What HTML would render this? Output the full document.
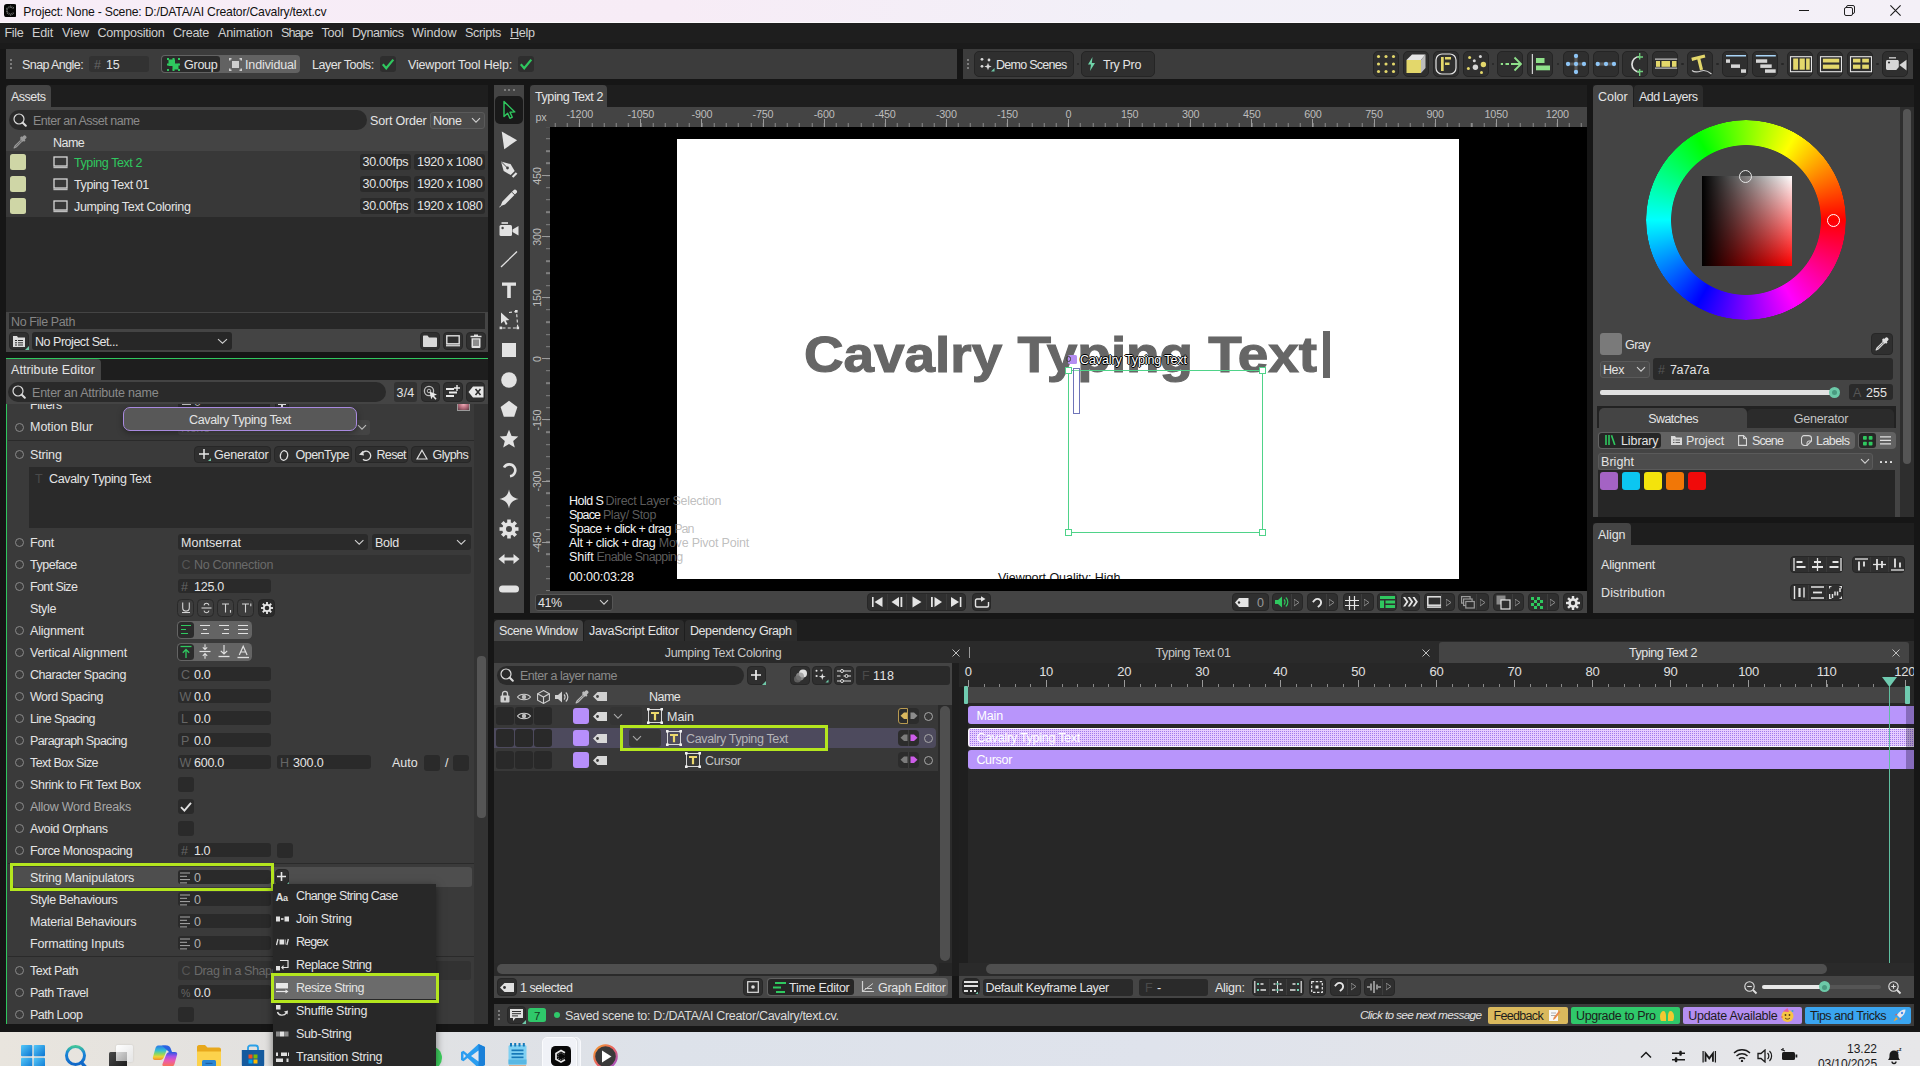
<!DOCTYPE html>
<html lang="en"><head><meta charset="utf-8"><title>Cavalry</title>
<style>
*{box-sizing:border-box;margin:0;padding:0}
html,body{width:1920px;height:1066px;overflow:hidden;background:#161616}
#root{position:relative;width:1920px;height:1066px;overflow:hidden;background:#161616;font-family:"Liberation Sans",sans-serif;font-size:12.5px;letter-spacing:-0.3px;color:#e4e4e4}
#root div,#root svg,#root span.a{position:absolute}
.t{white-space:pre}
.dim{color:#8c8c8c}
.ph{color:#8a8a8a}
.btn{background:#2b2b2b;border:1px solid #262626;border-radius:4px;box-shadow:0 0 0 1px #4a4a4a inset}
.tb{background:#333;border:1px solid #2a2a2a;border-radius:4px}
.inp{background:#2a2a2a;border-radius:3px}
.sel{background:#4a4a4a;border:1px solid #5a5a5a;border-radius:3px}
.pill{background:#2a2a2a;border-radius:11px}
.tab{background:#444;border-radius:4px 4px 0 0}
.tab2{background:#2c2c2c;border-radius:4px 4px 0 0}
.tbb{background:#2f2f2f;border:1px solid #252525;border-radius:5px}
.btn2{background:#2f2f2f;border:1px solid #272727;border-radius:4px}
.rl{font-size:10.8px;letter-spacing:-.2px;color:#bdbdbd}

</style></head>
<body>
<div id="root">
<!-- base -->
<div style="left:0px;top:0px;width:1920px;height:23px;background:linear-gradient(90deg,#f7edf7 0%,#f7ecf6 35%,#f2f0f8 60%,#f4f0f7 100%)"></div>
<div style="left:0px;top:22px;width:1920px;height:1px;background:#fcfafc"></div>
<div style="left:0px;top:23px;width:1920px;height:19.5px;background:#1e1e1e"></div>
<div style="left:6px;top:85px;width:482px;height:22px;background:#1e1e1e"></div>
<div style="left:530px;top:85px;width:1057px;height:22px;background:#1e1e1e"></div>
<div style="left:1593px;top:85px;width:321px;height:22px;background:#1e1e1e"></div>
<div style="left:6px;top:359px;width:482px;height:21px;background:#1e1e1e"></div>
<div style="left:1593px;top:523px;width:321px;height:22px;background:#1e1e1e"></div>
<div style="left:494px;top:619px;width:1420px;height:22px;background:#1e1e1e"></div>
<div style="left:0px;top:42.5px;width:1920px;height:6.5px;background:#1b1b1b"></div>
<svg style="left:3.6px;top:4.3px;" width="12.8" height="13.2" viewBox="0 0 12.8 13.2"><rect x="0" y="0" width="12.800" height="13.200" rx="2.800" fill="#050505"/><path d="M9.700 4.300 6.600 2.500 3 4.600v4l3.600 2.100 3.100-1.800" fill="none" stroke="#8a8a8a" stroke-width="1.700" stroke-dasharray="1.100 .6"/><path d="M9.700 4.300 6.600 2.500 3 4.600v4l3.600 2.100 3.100-1.800" fill="none" stroke="#050505" stroke-width=".5"/></svg>
<div class="t" style="left:23.3px;top:2.5px;height:18px;line-height:18px;letter-spacing:-0.20px;font-size:12.2px;color:#111">Project: None - Scene: D:/DATA/AI Creator/Cavalry/text.cv</div>
<div style="left:1799px;top:10px;width:10.3px;height:1px;background:#1a1a1a"></div>
<svg style="left:1843.5px;top:4.7px;" width="12" height="12" viewBox="0 0 12 12"><rect x="0.5" y="2.5" width="8" height="8" rx="1.5" fill="none" stroke="#222"/><path d="M2.5 2.5v-.5a1.5 1.5 0 0 1 1.5-1.5h5a1.5 1.5 0 0 1 1.5 1.5v5a1.5 1.5 0 0 1-1.5 1.5h-.5" fill="none" stroke="#222"/></svg>
<svg style="left:1889.5px;top:4.5px;" width="11" height="11" viewBox="0 0 11 11"><path d="M.4.400l10.200 10.200M10.600.400l-10.200 10.200" stroke="#1a1a1a" stroke-width="1.100"/></svg>
<!-- top -->
<div class="t" style="left:4.5px;top:25.0px;height:16px;line-height:16px;letter-spacing:-0.32px;font-size:12.6px;color:#cfcfcf">File</div>
<div class="t" style="left:32px;top:25.0px;height:16px;line-height:16px;letter-spacing:-0.18px;font-size:12.6px;color:#cfcfcf">Edit</div>
<div class="t" style="left:62px;top:25.0px;height:16px;line-height:16px;letter-spacing:-0.02px;font-size:12.6px;color:#cfcfcf">View</div>
<div class="t" style="left:97.5px;top:25.0px;height:16px;line-height:16px;letter-spacing:-0.27px;font-size:12.6px;color:#cfcfcf">Composition</div>
<div class="t" style="left:173px;top:25.0px;height:16px;line-height:16px;letter-spacing:-0.30px;font-size:12.6px;color:#cfcfcf">Create</div>
<div class="t" style="left:218px;top:25.0px;height:16px;line-height:16px;letter-spacing:-0.17px;font-size:12.6px;color:#cfcfcf">Animation</div>
<div class="t" style="left:281px;top:25.0px;height:16px;line-height:16px;letter-spacing:-0.98px;font-size:12.6px;color:#cfcfcf">Shape</div>
<div class="t" style="left:321.5px;top:25.0px;height:16px;line-height:16px;letter-spacing:-0.28px;font-size:12.6px;color:#cfcfcf">Tool</div>
<div class="t" style="left:352px;top:25.0px;height:16px;line-height:16px;letter-spacing:-0.47px;font-size:12.6px;color:#cfcfcf">Dynamics</div>
<div class="t" style="left:412px;top:25.0px;height:16px;line-height:16px;letter-spacing:-0.05px;font-size:12.6px;color:#cfcfcf">Window</div>
<div class="t" style="left:465px;top:25.0px;height:16px;line-height:16px;letter-spacing:-0.36px;font-size:12.6px;color:#cfcfcf">Scripts</div>
<div class="t" style="left:510px;top:25.0px;height:16px;line-height:16px;color:#cfcfcf;font-size:12.6px"><u>H</u>elp</div>
<div style="left:6px;top:49px;width:951px;height:30px;background:#3c3c3c"></div>
<div style="left:963px;top:49px;width:950px;height:30px;background:#3c3c3c"></div>
<div style="left:10px;top:59px;width:2px;height:2px;background:#7c7c7c"></div>
<div style="left:10px;top:63px;width:2px;height:2px;background:#7c7c7c"></div>
<div style="left:10px;top:67px;width:2px;height:2px;background:#7c7c7c"></div>
<div style="left:967px;top:59px;width:2px;height:2px;background:#7c7c7c"></div>
<div style="left:967px;top:63px;width:2px;height:2px;background:#7c7c7c"></div>
<div style="left:967px;top:67px;width:2px;height:2px;background:#7c7c7c"></div>
<div class="t" style="left:22px;top:56.5px;height:16px;line-height:16px;letter-spacing:-0.58px;">Snap Angle:</div>
<div style="left:89px;top:56px;width:60px;height:16px;background:#323232;border-radius:3px"></div>
<div class="t" style="left:94px;top:56.5px;height:16px;line-height:16px;color:#666">#</div>
<div class="t" style="left:106px;top:56.5px;height:16px;line-height:16px;letter-spacing:-0.20px;">15</div>
<div style="left:161px;top:55px;width:139px;height:18px;background:#626262;border-radius:4px"></div>
<div style="left:162px;top:56px;width:58px;height:16px;background:#2a2a2a;border-radius:3px"></div>
<svg style="left:167px;top:58px;" width="13" height="13" viewBox="0 0 13 13"><rect x="1.5" y="1.5" width="6.5" height="6.5" fill="#2fc85f"/><rect x="5.5" y="5.5" width="6" height="6" fill="#2fc85f"/><g fill="#2fc85f"><rect x="0" y="0" width="2" height="2"/><rect x="5.5" y="0" width="2" height="2"/><rect x="11" y="0" width="2" height="2"/><rect x="0" y="5.5" width="2" height="2"/><rect x="11" y="5.5" width="2" height="2"/><rect x="0" y="11" width="2" height="2"/><rect x="5.5" y="11" width="2" height="2"/><rect x="11" y="11" width="2" height="2"/></g></svg>
<div class="t" style="left:184px;top:56.5px;height:16px;line-height:16px;letter-spacing:-0.25px;">Group</div>
<svg style="left:228.5px;top:58px;" width="13" height="13" viewBox="0 0 13 13"><rect x="3" y="3" width="7" height="7" fill="#cfcfcf"/><g fill="#cfcfcf"><rect x="0" y="0" width="2.5" height="1.5"/><rect x="0" y="0" width="1.5" height="2.5"/><rect x="10.5" y="0" width="2.5" height="1.5"/><rect x="11.5" y="0" width="1.5" height="2.5"/><rect x="0" y="11.5" width="2.5" height="1.5"/><rect x="0" y="10.5" width="1.5" height="2.5"/><rect x="10.5" y="11.5" width="2.5" height="1.5"/><rect x="11.5" y="10.5" width="1.5" height="2.5"/></g></svg>
<div class="t" style="left:245px;top:56.5px;height:16px;line-height:16px;letter-spacing:-0.13px;">Individual</div>
<div class="t" style="left:312px;top:56.5px;height:16px;line-height:16px;letter-spacing:-0.46px;">Layer Tools:</div>
<div style="left:380px;top:56px;width:16px;height:15.8px;background:#2e2e2e;border-radius:3px"></div>
<svg style="left:381px;top:57px;" width="14" height="14" viewBox="0 0 14 14"><path d="M1.800 7.300 5.200 11.200 12.300 2.600" fill="none" stroke="#2fc85f" stroke-width="2.200"/></svg>
<div class="t" style="left:408px;top:56.5px;height:16px;line-height:16px;letter-spacing:-0.17px;">Viewport Tool Help:</div>
<div style="left:518px;top:56px;width:16px;height:15.8px;background:#2e2e2e;border-radius:3px"></div>
<svg style="left:519px;top:57px;" width="14" height="14" viewBox="0 0 14 14"><path d="M1.800 7.300 5.200 11.200 12.300 2.600" fill="none" stroke="#2fc85f" stroke-width="2.200"/></svg>
<div class="tbb" style="left:973.8px;top:50.7px;width:100.6px;height:26.8px;"></div>
<svg style="left:979.5px;top:56.5px;" width="15" height="15" viewBox="0 0 15 15"><g fill="#d8d8d8"><circle cx="2" cy="2.300" r="1.400"/><circle cx="9" cy="3" r="1.400"/><circle cx="2" cy="9.300" r="1.400"/><path d="M8 5.800l1 2.700 2.700 1-2.700 1-1 2.700-1-2.700-2.700-1 2.700-1z"/></g><path d="M14.500 11v3.500H11z" fill="#6fc8a8"/></svg>
<div class="t" style="left:996px;top:56.5px;height:16px;line-height:16px;letter-spacing:-0.73px;">Demo Scenes</div>
<div style="left:1076.6px;top:63px;width:2.4px;height:2.4px;background:#262626;border-radius:50%"></div>
<div class="tbb" style="left:1080.8px;top:50.7px;width:74.6px;height:26.8px;"></div>
<svg style="left:1087px;top:57px;" width="9" height="14" viewBox="0 0 9 14"><path d="M5.5 0 1 7.5h3L3 14l5-8H4.8z" fill="#6fd3a8"/></svg>
<div class="t" style="left:1103px;top:56.5px;height:16px;line-height:16px;letter-spacing:-0.36px;">Try Pro</div>
<div class="tbb" style="left:1372.8px;top:50.7px;width:26.4px;height:26.8px;"></div>
<svg style="left:1374px;top:52px;" width="25" height="24" viewBox="0 0 25 24"><circle cx="4.5" cy="4.5" r="1.550" fill="#e3d76b"/><circle cx="4.5" cy="12.0" r="1.550" fill="#e3d76b"/><circle cx="4.5" cy="19.5" r="1.550" fill="#e3d76b"/><circle cx="12.0" cy="4.5" r="1.550" fill="#e3d76b"/><circle cx="12.0" cy="12.0" r="1.550" fill="#e3d76b"/><circle cx="12.0" cy="19.5" r="1.550" fill="#e3d76b"/><circle cx="19.5" cy="4.5" r="1.550" fill="#e3d76b"/><circle cx="19.5" cy="12.0" r="1.550" fill="#e3d76b"/><circle cx="19.5" cy="19.5" r="1.550" fill="#e3d76b"/></svg>
<div class="tbb" style="left:1402.8px;top:50.7px;width:26.4px;height:26.8px;"></div>
<svg style="left:1404px;top:52px;" width="25" height="24" viewBox="0 0 25 24"><path d="M2.500 8 8 2.500h13.500L17 8z" fill="#e4e4e4"/><path d="M17 8l4.500-5.500V16L17 21z" fill="#bdbdbd"/><rect x="2.500" y="8" width="14.500" height="13" fill="#e3d76b"/></svg>
<div class="tbb" style="left:1432.8px;top:50.7px;width:26.4px;height:26.8px;"></div>
<svg style="left:1434px;top:52px;" width="25" height="24" viewBox="0 0 25 24"><rect x="2" y="2" width="20" height="20" rx="6" fill="none" stroke="#e4e4e4" stroke-width="1.200"/><rect x="7" y="5" width="2.700" height="14" fill="#e3d76b"/><rect x="11" y="5" width="6" height="2.500" fill="#e3d76b"/><rect x="11" y="10.500" width="4.500" height="2.500" fill="#e3d76b"/></svg>
<div class="tbb" style="left:1462.8px;top:50.7px;width:26.4px;height:26.8px;"></div>
<svg style="left:1464px;top:52px;" width="25" height="24" viewBox="0 0 25 24"><circle cx="5.600" cy="5.500" r="1.500" fill="#e3d76b"/><circle cx="16.400" cy="4.500" r="1.500" fill="#d6d6d6"/><circle cx="10.300" cy="8.700" r="1.500" fill="#d6d6d6"/><circle cx="19.400" cy="12.500" r="2.700" fill="#e3d76b"/><circle cx="11.400" cy="15.200" r="2.700" fill="#d6d6d6"/><circle cx="4.400" cy="16.400" r="1.500" fill="#e3d76b"/><circle cx="17.500" cy="20.400" r="1.500" fill="#e3d76b"/></svg>
<div class="tbb" style="left:1496.8px;top:50.7px;width:26.4px;height:26.8px;"></div>
<svg style="left:1498px;top:52px;" width="25" height="24" viewBox="0 0 25 24"><path d="M2.800 12H5M7.500 12H11M13 12h9.500M16.500 5.500 23 12l-6.500 6.500" fill="none" stroke="#8fe08a" stroke-width="1.800"/></svg>
<div class="tbb" style="left:1526.8px;top:50.7px;width:26.4px;height:26.8px;"></div>
<svg style="left:1528px;top:52px;" width="25" height="24" viewBox="0 0 25 24"><rect x="3.800" y="2" width="1.100" height="20" fill="#e4e4e4"/><rect x="8" y="6" width="8.500" height="5" fill="#8fe08a"/><rect x="8" y="13.500" width="14" height="4.800" fill="#8fe08a"/></svg>
<div class="tbb" style="left:1562.8px;top:50.7px;width:26.4px;height:26.8px;"></div>
<svg style="left:1564px;top:52px;" width="25" height="24" viewBox="0 0 25 24"><path d="M4 12h16M12 4v16" stroke="#5a5a5a" stroke-width="3.200"/><g fill="#8ec5f5"><circle cx="12" cy="12" r="2.150"/><circle cx="12" cy="4" r="2.150"/><circle cx="12" cy="20" r="2.150"/><circle cx="4" cy="12" r="2.150"/><circle cx="20" cy="12" r="2.150"/></g></svg>
<div class="tbb" style="left:1592.8px;top:50.7px;width:26.4px;height:26.8px;"></div>
<svg style="left:1594px;top:52px;" width="25" height="24" viewBox="0 0 25 24"><path d="M3.700 12H20" stroke="#5a5a5a" stroke-width="3.200"/><g fill="#8ec5f5"><circle cx="3.700" cy="12" r="2.150"/><circle cx="12" cy="12" r="2.150"/><circle cx="20" cy="12" r="2.150"/></g></svg>
<div class="tbb" style="left:1621.8px;top:50.7px;width:26.4px;height:26.8px;"></div>
<svg style="left:1623px;top:52px;" width="25" height="24" viewBox="0 0 25 24"><path d="M16.700 4.500A7.750 7.750 0 0 0 16.700 20" fill="none" stroke="#e0e0e0" stroke-width="1.700"/><path d="M16.700 1v6.500M16.700 17v7M14 5h6M14 19.500h6" stroke="#6fcf7c" stroke-width="1.300"/></svg>
<div class="tbb" style="left:1651.8px;top:50.7px;width:26.4px;height:26.8px;"></div>
<svg style="left:1653px;top:52px;" width="25" height="24" viewBox="0 0 25 24"><rect x="2" y="6.600" width="22.200" height="1" fill="#e4e4e4"/><rect x="2" y="15.600" width="22.200" height="1" fill="#e4e4e4"/><rect x="3" y="9" width="4" height="5.800" fill="#e3d76b"/><rect x="8.500" y="9" width="8.500" height="5.800" fill="#e3d76b"/><rect x="19" y="9" width="4.500" height="5.800" fill="#e3d76b"/></svg>
<div class="tbb" style="left:1686.8px;top:50.7px;width:26.4px;height:26.8px;"></div>
<svg style="left:1688px;top:52px;" width="25" height="24" viewBox="0 0 25 24"><path d="M3.300 5.800 16.600 2.500l.8 3.100-5 1.250 2.650 10.600-3.100.8L9.300 7.600l-5.200 1.300z" fill="#e3d76b"/><path d="M4 18.500c3 2.500 6 1.500 9 .5s7 0 10.500 3" fill="none" stroke="#d0d0d0" stroke-width="1.100"/></svg>
<div class="tbb" style="left:1721.8px;top:50.7px;width:26.4px;height:26.8px;"></div>
<svg style="left:1723px;top:52px;" width="25" height="24" viewBox="0 0 25 24"><rect x="3" y="3" width="20" height="1.500" fill="#a9d5f8"/><rect x="3" y="7.300" width="4" height="3.500" fill="#d6d6d6"/><rect x="8" y="12.400" width="9" height="3.500" fill="#d6d6d6"/><rect x="18" y="17.300" width="5" height="3.500" fill="#d6d6d6"/></svg>
<div class="tbb" style="left:1751.8px;top:50.7px;width:26.4px;height:26.8px;"></div>
<svg style="left:1753px;top:52px;" width="25" height="24" viewBox="0 0 25 24"><rect x="2.800" y="3" width="20" height="1.500" fill="#a9d5f8"/><rect x="3" y="7.300" width="11.200" height="3.500" fill="#d6d6d6"/><rect x="7.300" y="12.400" width="11.400" height="3.500" fill="#d6d6d6"/><rect x="12" y="17.300" width="10.700" height="3.500" fill="#d6d6d6"/></svg>
<div class="tbb" style="left:1786.8px;top:50.7px;width:26.4px;height:26.8px;"></div>
<svg style="left:1788px;top:52px;" width="25" height="24" viewBox="0 0 25 24"><rect x="2.500" y="4.700" width="21" height="15" fill="none" stroke="#e4e4e4" stroke-width="1.100"/><rect x="5.200" y="6.500" width="4.900" height="11.200" fill="#e3d76b"/><rect x="11.600" y="6.500" width="5.200" height="11.200" fill="#e3d76b"/><rect x="18.100" y="6.500" width="3.600" height="11.200" fill="#e3d76b"/></svg>
<div class="tbb" style="left:1816.8px;top:50.7px;width:26.4px;height:26.8px;"></div>
<svg style="left:1818px;top:52px;" width="25" height="24" viewBox="0 0 25 24"><rect x="2.500" y="4.700" width="21" height="15" fill="none" stroke="#e4e4e4" stroke-width="1.100"/><rect x="4.900" y="6.700" width="16.300" height="3.800" fill="#e3d76b"/><rect x="4.900" y="12.600" width="16.300" height="4.200" fill="#e3d76b"/></svg>
<div class="tbb" style="left:1846.8px;top:50.7px;width:26.4px;height:26.8px;"></div>
<svg style="left:1848px;top:52px;" width="25" height="24" viewBox="0 0 25 24"><rect x="2.500" y="4.700" width="21" height="15" fill="none" stroke="#e4e4e4" stroke-width="1.100"/><rect x="5" y="6.700" width="7.400" height="3.800" fill="#e3d76b"/><rect x="14.200" y="6.700" width="6.700" height="3.800" fill="#e3d76b"/><rect x="5" y="12.600" width="7.400" height="4.200" fill="#e3d76b"/><rect x="14.200" y="12.600" width="6.700" height="4.200" fill="#e3d76b"/></svg>
<div class="tbb" style="left:1881.8px;top:50.7px;width:26.4px;height:26.8px;"></div>
<svg style="left:1883px;top:52px;" width="25" height="24" viewBox="0 0 25 24"><path d="M3 9.400c0-.9.600-1.500 1.500-1.500h9.800c.9 0 1.500.6 1.500 1.500v5.600L13.300 18H4.500C3.600 18 3 17.400 3 16.500z" fill="#d6d6d6"/><path d="M16.300 13 23.500 7.700v10.800z" fill="#d6d6d6"/><rect x="6" y="5.200" width="7" height="1.300" fill="#d6d6d6"/><circle cx="6" cy="10.500" r="1.100" fill="#2f2f2f"/></svg>
<div style="left:1491.8px;top:63px;width:2.4px;height:2.4px;background:#262626;border-radius:50%"></div>
<div style="left:1556.8px;top:63px;width:2.4px;height:2.4px;background:#262626;border-radius:50%"></div>
<div style="left:1681.3px;top:63px;width:2.4px;height:2.4px;background:#262626;border-radius:50%"></div>
<div style="left:1716.3px;top:63px;width:2.4px;height:2.4px;background:#262626;border-radius:50%"></div>
<div style="left:1781.3px;top:63px;width:2.4px;height:2.4px;background:#262626;border-radius:50%"></div>
<div style="left:1876.3px;top:63px;width:2.4px;height:2.4px;background:#262626;border-radius:50%"></div>
<!-- assets -->
<div class="tab" style="left:6px;top:85px;width:45px;height:22px;"></div>
<div class="t" style="left:11px;top:89.0px;height:16px;line-height:16px;letter-spacing:-0.50px;">Assets</div>
<div style="left:6px;top:107px;width:482px;height:44px;background:#444"></div>
<div style="left:6px;top:151px;width:482px;height:66px;background:#383838"></div>
<div style="left:6px;top:217px;width:482px;height:95px;background:#2a2a2a"></div>
<div class="pill" style="left:9px;top:110px;width:358px;height:20px;"></div>
<svg style="left:13px;top:113px;" width="14" height="14" viewBox="0 0 14 14"><circle cx="6" cy="6" r="5" fill="none" stroke="#dcdcdc" stroke-width="1.2"/><path d="M9.8 9.8l3 3" stroke="#dcdcdc" stroke-width="2" stroke-linecap="round"/></svg>
<div class="t ph" style="left:33px;top:112.5px;height:16px;line-height:16px;letter-spacing:-0.50px;">Enter an Asset name</div>
<div class="t" style="left:370px;top:112.5px;height:16px;line-height:16px;letter-spacing:-0.19px;">Sort Order</div>
<div class="sel" style="left:430px;top:112px;width:55px;height:17px;"></div>
<div class="t" style="left:433px;top:112.5px;height:16px;line-height:16px;letter-spacing:-0.35px;">None</div>
<svg style="left:471px;top:117px;" width="10" height="7" viewBox="0 0 10 7"><path d="M1 1.2l4 4 4-4" fill="none" stroke="#cfcfcf" stroke-width="1.1"/></svg>
<svg style="left:13px;top:135px;" width="14" height="14" viewBox="0 0 14 14"><path d="M10.200 .900a1.900 1.900 0 0 1 2.700 2.700l-1.100 1.100.7.700-1.300 1.300-.6-.600-.9.900-2.900-2.900.9-.900-.6-.600 1.300-1.300.7.700z" fill="#9a9a9a"/><path d="M7.700 5.300 2 11l-.9 2 2-.9 5.700-5.700" fill="none" stroke="#9a9a9a" stroke-width="1.100" stroke-linejoin="round"/></svg>
<div class="t" style="left:53px;top:135.0px;height:16px;line-height:16px;letter-spacing:-0.54px;">Name</div>
<div style="left:10px;top:154px;width:16px;height:16px;background:#cfd6a6;border-radius:2.5px"></div>
<svg style="left:53px;top:156px;" width="15" height="13" viewBox="0 0 15 13"><rect x="1" y="1" width="13" height="9" fill="none" stroke="#d8d8d8" stroke-width="1.3"/><rect x="0.4" y="10.6" width="14.2" height="1.6" fill="#bdbdbd"/></svg>
<div class="t" style="left:74px;top:155.0px;height:16px;line-height:16px;letter-spacing:-0.42px;color:#2fc85f">Typing Text 2</div>
<div style="left:360px;top:154px;width:51px;height:16px;background:#2a2a2a;border-radius:3px"></div>
<div class="t" style="left:362.5px;top:153.5px;height:16px;line-height:16px;letter-spacing:-0.27px;">30.00fps</div>
<div style="left:414px;top:154px;width:71px;height:16px;background:#2a2a2a;border-radius:3px"></div>
<div class="t" style="left:417px;top:153.5px;height:16px;line-height:16px;letter-spacing:-0.31px;">1920 x 1080</div>
<div style="left:10px;top:176px;width:16px;height:16px;background:#cfd6a6;border-radius:2.5px"></div>
<svg style="left:53px;top:178px;" width="15" height="13" viewBox="0 0 15 13"><rect x="1" y="1" width="13" height="9" fill="none" stroke="#d8d8d8" stroke-width="1.3"/><rect x="0.4" y="10.6" width="14.2" height="1.6" fill="#bdbdbd"/></svg>
<div class="t" style="left:74px;top:177.0px;height:16px;line-height:16px;letter-spacing:-0.39px;color:#e4e4e4">Typing Text 01</div>
<div style="left:360px;top:176px;width:51px;height:16px;background:#2a2a2a;border-radius:3px"></div>
<div class="t" style="left:362.5px;top:175.5px;height:16px;line-height:16px;letter-spacing:-0.27px;">30.00fps</div>
<div style="left:414px;top:176px;width:71px;height:16px;background:#2a2a2a;border-radius:3px"></div>
<div class="t" style="left:417px;top:175.5px;height:16px;line-height:16px;letter-spacing:-0.31px;">1920 x 1080</div>
<div style="left:10px;top:198px;width:16px;height:16px;background:#cfd6a6;border-radius:2.5px"></div>
<svg style="left:53px;top:200px;" width="15" height="13" viewBox="0 0 15 13"><rect x="1" y="1" width="13" height="9" fill="none" stroke="#d8d8d8" stroke-width="1.3"/><rect x="0.4" y="10.6" width="14.2" height="1.6" fill="#bdbdbd"/></svg>
<div class="t" style="left:74px;top:199.0px;height:16px;line-height:16px;letter-spacing:-0.33px;color:#e4e4e4">Jumping Text Coloring</div>
<div style="left:360px;top:198px;width:51px;height:16px;background:#2a2a2a;border-radius:3px"></div>
<div class="t" style="left:362.5px;top:197.5px;height:16px;line-height:16px;letter-spacing:-0.27px;">30.00fps</div>
<div style="left:414px;top:198px;width:71px;height:16px;background:#2a2a2a;border-radius:3px"></div>
<div class="t" style="left:417px;top:197.5px;height:16px;line-height:16px;letter-spacing:-0.31px;">1920 x 1080</div>
<div style="left:6px;top:312px;width:482px;height:40px;background:#444"></div>
<div style="left:9px;top:313px;width:476px;height:16px;background:#272727"></div>
<div class="t" style="left:11px;top:313.5px;height:16px;line-height:16px;letter-spacing:-0.40px;color:#858585">No File Path</div>
<div class="btn2" style="left:9px;top:332px;width:20px;height:18px;"></div>
<svg style="left:12px;top:335px;" width="14" height="13" viewBox="0 0 14 13"><path d="M1 1h4l1 1.5h7V12H1z" fill="#dcdcdc"/><path d="M3 5.5h2M6 5.5h5M3 7.8h2M6 7.8h5M3 10h2M6 10h5" stroke="#2a2a2a" stroke-width="1"/></svg>
<svg style="left:25px;top:346px;" width="4" height="4" viewBox="0 0 4 4"><path d="M4 0v4H0z" fill="#6fc8a8"/></svg>
<div style="left:32px;top:332px;width:200px;height:18px;background:#272727;border-radius:3px"></div>
<div class="t" style="left:35px;top:333.5px;height:16px;line-height:16px;letter-spacing:-0.47px;">No Project Set...</div>
<svg style="left:217px;top:338px;" width="11" height="7" viewBox="0 0 11 7"><path d="M1 1.2l4.5 4 4.5-4" fill="none" stroke="#cfcfcf" stroke-width="1.1"/></svg>
<div class="btn2" style="left:420px;top:332px;width:20px;height:18px;"></div>
<div class="btn2" style="left:443px;top:332px;width:20px;height:18px;"></div>
<div class="btn2" style="left:466px;top:332px;width:20px;height:18px;"></div>
<svg style="left:423px;top:335px;" width="14" height="12" viewBox="0 0 14 12"><path d="M0 1.5C0 .8.5.5 1 .5h3.5l1.5 2h7c.6 0 1 .4 1 1V11c0 .6-.4 1-1 1H1c-.6 0-1-.4-1-1z" fill="#d8d8d8"/></svg>
<svg style="left:446px;top:335px;" width="14" height="12" viewBox="0 0 14 12"><rect x=".8" y=".8" width="12.4" height="8" fill="none" stroke="#e0e0e0" stroke-width="1.4"/><rect x="0" y="9.6" width="14" height="1.8" fill="#c8c8c8"/></svg>
<svg style="left:470px;top:334px;" width="12" height="14" viewBox="0 0 12 14"><path d="M4 .5h4v1.2h3.5v1.6H.5V1.7H4z" fill="#e0e0e0"/><path d="M1.5 4.2h9V13a1 1 0 0 1-1 1h-7a1 1 0 0 1-1-1z" fill="#e0e0e0"/><path d="M4 5.5v6.5M6 5.5v6.5M8 5.5v6.5" stroke="#3a3a3a" stroke-width="1"/></svg>
<!-- attr -->
<div style="left:6px;top:358px;width:482px;height:1px;background:#2fc85f"></div>
<div style="left:6px;top:359px;width:95px;height:21px;background:#444;border-radius:0 4px 0 0"></div>
<div class="t" style="left:11px;top:362.0px;height:16px;line-height:16px;letter-spacing:0.08px;">Attribute Editor</div>
<div style="left:6px;top:380px;width:482px;height:24px;background:#444"></div>
<div class="pill" style="left:8px;top:382px;width:378px;height:20px;"></div>
<svg style="left:12px;top:385px;" width="14" height="14" viewBox="0 0 14 14"><circle cx="6" cy="6" r="5" fill="none" stroke="#dcdcdc" stroke-width="1.2"/><path d="M9.8 9.8l3 3" stroke="#dcdcdc" stroke-width="2" stroke-linecap="round"/></svg>
<div class="t ph" style="left:32px;top:384.5px;height:16px;line-height:16px;letter-spacing:-0.21px;">Enter an Attribute name</div>
<div style="left:394px;top:382px;width:23px;height:20px;background:#323232;border-radius:3px"></div>
<div class="t" style="left:396.5px;top:384.5px;height:16px;line-height:16px;letter-spacing:0.20px;">3/4</div>
<div class="btn2" style="left:420.5px;top:382px;width:19.5px;height:20px;"></div>
<div class="btn2" style="left:443px;top:382px;width:19.5px;height:20px;"></div>
<div class="btn2" style="left:465.5px;top:382px;width:19.5px;height:20px;"></div>
<svg style="left:423px;top:385px;" width="15" height="15" viewBox="0 0 15 15"><circle cx="6" cy="6" r="4.6" fill="none" stroke="#bdbdbd" stroke-width="1.3"/><circle cx="6" cy="6" r="1.8" fill="none" stroke="#bdbdbd" stroke-width="1"/><path d="M6.5 6.5l7.5 3-3 1.2 2.6 3-1.2 1-2.6-3-1.6 2.6z" fill="#e8e8e8"/></svg>
<svg style="left:446px;top:385px;" width="14" height="14" viewBox="0 0 14 14"><path d="M0 4h8M3 7.5h8M0 11h8" stroke="#e8e8e8" stroke-width="2"/><path d="M11 0v6M8 3h6" stroke="#e8e8e8" stroke-width="1.4"/></svg>
<svg style="left:467.5px;top:386px;" width="16" height="12" viewBox="0 0 16 12"><path d="M5 .5h10.5v11H5L.5 6z" fill="#e8e8e8"/><path d="M7.5 3l5 6M12.5 3l-5 6" stroke="#2f2f2f" stroke-width="1.6"/></svg>
<div style="left:6px;top:404px;width:468px;height:620px;background:#3a3a3a"></div>
<div style="left:474px;top:404px;width:14px;height:620px;background:#333"></div>
<div style="left:477px;top:656px;width:8.5px;height:162px;background:#555;border-radius:4px"></div>
<div style="left:6px;top:404px;width:1.2px;height:620px;background:#2fc85f"></div>
<div style="left:8px;top:404px;width:466px;height:12px;overflow:hidden">
<div class="t" style="left:22px;top:-7.0px;height:16px;line-height:16px;">Filters</div>
<div style="left:170px;top:-9px;width:92px;height:14px;background:#2a2a2a;border-radius:3px"></div>
<div style="left:174px;top:0px;width:9px;height:1.2px;background:#bdbdbd"></div>
<div class="t" style="left:186px;top:-10.0px;height:16px;line-height:16px;color:#b0b0b0">0</div>
<div class="btn2" style="left:267px;top:-10px;width:14px;height:16px;"></div>
<div style="left:270px;top:-1px;width:8px;height:1.6px;background:#e0e0e0"></div>
<div style="left:273.2px;top:-1px;width:1.6px;height:5px;background:#e0e0e0"></div>
<div style="left:448.5px;top:-6px;width:13px;height:13px;background:radial-gradient(circle at 50% 45%,#f4b0bc 0,#b06878 55%,#5a3a42 100%);border:1px solid #9a9a9a"></div>
</div>
<div style="left:178px;top:420px;width:192px;height:15px;background:#444;border-radius:3px"></div>
<div class="t" style="left:181px;top:420.0px;height:16px;line-height:16px;letter-spacing:-0.35px;color:#777">None</div>
<svg style="left:357px;top:424px;" width="10" height="7" viewBox="0 0 10 7"><path d="M1 1.2l4 4 4-4" fill="none" stroke="#bdbdbd" stroke-width="1.1"/></svg>
<div style="left:14.5px;top:422.5px;width:9px;height:9px;border:1.2px solid #8a8a8a;border-radius:50%"></div>
<div class="t" style="left:30px;top:419.0px;height:16px;line-height:16px;letter-spacing:-0.02px;color:#e4e4e4">Motion Blur</div>
<div style="left:8px;top:440px;width:466px;height:1px;background:#2a2a2a"></div>
<div style="left:14.5px;top:450.0px;width:9px;height:9px;border:1.2px solid #8a8a8a;border-radius:50%"></div>
<div class="t" style="left:30px;top:446.5px;height:16px;line-height:16px;letter-spacing:-0.16px;color:#e4e4e4">String</div>
<div class="btn2" style="left:194px;top:446px;width:76.5px;height:17px;"></div>
<div class="btn2" style="left:273.5px;top:446px;width:78px;height:17px;"></div>
<div class="btn2" style="left:354.5px;top:446px;width:53.5px;height:17px;"></div>
<div class="btn2" style="left:411px;top:446px;width:59.5px;height:17px;"></div>
<svg style="left:199px;top:449px;" width="12" height="12" viewBox="0 0 12 12"><path d="M5 0v10M0 5h10" stroke="#e8e8e8" stroke-width="1.5"/><path d="M12 9v3H9z" fill="#6fc8a8"/></svg>
<div class="t" style="left:214px;top:446.5px;height:16px;line-height:16px;letter-spacing:-0.20px;">Generator</div>
<svg style="left:279px;top:449.5px;" width="10" height="11" viewBox="0 0 10 11"><ellipse cx="5" cy="5.5" rx="3.6" ry="4.8" fill="none" stroke="#e0e0e0" stroke-width="1.3" transform="rotate(12 5 5.5)"/></svg>
<div class="t" style="left:295.5px;top:446.5px;height:16px;line-height:16px;letter-spacing:-0.52px;">OpenType</div>
<svg style="left:359px;top:449px;" width="13" height="12" viewBox="0 0 13 12"><path d="M3.2 4.3A4.6 4.6 0 1 1 4 10.2" fill="none" stroke="#e0e0e0" stroke-width="1.3"/><path d="M0 5.8 3.8 1.8 5 6.6z" fill="#e0e0e0"/></svg>
<div class="t" style="left:376.5px;top:446.5px;height:16px;line-height:16px;letter-spacing:-0.67px;">Reset</div>
<svg style="left:416px;top:449px;" width="12" height="11" viewBox="0 0 12 11"><path d="M6 1.2 11 10H1z" fill="none" stroke="#e0e0e0" stroke-width="1.2"/></svg>
<div class="t" style="left:432.5px;top:446.5px;height:16px;line-height:16px;letter-spacing:-0.53px;">Glyphs</div>
<div style="left:29px;top:467px;width:443px;height:61px;background:#2a2a2a"></div>
<div class="t" style="left:35px;top:471.0px;height:16px;line-height:16px;color:#4a4a4a">T</div>
<div class="t" style="left:49px;top:471.0px;height:16px;line-height:16px;letter-spacing:-0.35px;">Cavalry Typing Text</div>
<div style="left:123px;top:407px;width:234px;height:24px;background:#585858;border:1.6px solid #a98ae0;border-radius:7px;box-shadow:0 2px 6px rgba(0,0,0,.35)"></div>
<div class="t" style="left:90.0px;width:300px;text-align:center;top:411.5px;height:16px;line-height:16px;letter-spacing:-0.35px;">Cavalry Typing Text</div>
<div style="left:14.5px;top:538.0px;width:9px;height:9px;border:1.2px solid #8a8a8a;border-radius:50%"></div>
<div class="t" style="left:30px;top:534.5px;height:16px;line-height:16px;letter-spacing:-0.25px;color:#e4e4e4">Font</div>
<div style="left:178px;top:534px;width:190px;height:16px;background:#2a2a2a;border-radius:3px"></div>
<div class="t" style="left:181px;top:534.5px;height:16px;line-height:16px;letter-spacing:0.03px;">Montserrat</div>
<svg style="left:354px;top:539px;" width="11" height="7" viewBox="0 0 11 7"><path d="M1 1.2l4.2 4 4.2-4" fill="none" stroke="#d0d0d0" stroke-width="1.1"/></svg>
<div style="left:372px;top:534px;width:99px;height:16px;background:#2a2a2a;border-radius:3px"></div>
<div class="t" style="left:375px;top:534.5px;height:16px;line-height:16px;letter-spacing:-0.26px;">Bold</div>
<svg style="left:456px;top:539px;" width="11" height="7" viewBox="0 0 11 7"><path d="M1 1.2l4.2 4 4.2-4" fill="none" stroke="#d0d0d0" stroke-width="1.1"/></svg>
<div style="left:14.5px;top:560.0px;width:9px;height:9px;border:1.2px solid #8a8a8a;border-radius:50%"></div>
<div class="t" style="left:30px;top:556.5px;height:16px;line-height:16px;letter-spacing:-0.49px;color:#e4e4e4">Typeface</div>
<div style="left:178px;top:555px;width:293px;height:19px;background:#323232;border-radius:3px"></div>
<div class="t" style="left:181.5px;top:556.5px;height:16px;line-height:16px;color:#555">C</div>
<div class="t" style="left:194px;top:556.5px;height:16px;line-height:16px;letter-spacing:-0.28px;color:#6a6a6a">No Connection</div>
<div style="left:14.5px;top:582.0px;width:9px;height:9px;border:1.2px solid #8a8a8a;border-radius:50%"></div>
<div class="t" style="left:30px;top:578.5px;height:16px;line-height:16px;letter-spacing:-0.61px;color:#e4e4e4">Font Size</div>
<div style="left:178px;top:579px;width:92.5px;height:13.8px;background:#2a2a2a;border-radius:3px"></div>
<div class="t" style="left:181px;top:578.5px;height:16px;line-height:16px;color:#666;font-size:12.5px">#</div>
<div class="t" style="left:194px;top:578.6px;height:16px;line-height:16px;letter-spacing:-0.26px;color:#e4e4e4">125.0</div>
<div class="t" style="left:30px;top:600.5px;height:16px;line-height:16px;letter-spacing:-0.36px;color:#e4e4e4">Style</div>
<div style="left:177.3px;top:599.4px;width:17.2px;height:17.2px;background:#3d3d3d;border:1px solid #292929;border-radius:4.500px"></div>
<div style="left:197.3px;top:599.4px;width:17.2px;height:17.2px;background:#3d3d3d;border:1px solid #292929;border-radius:4.500px"></div>
<div style="left:217.3px;top:599.4px;width:17.2px;height:17.2px;background:#3d3d3d;border:1px solid #292929;border-radius:4.500px"></div>
<div style="left:237.3px;top:599.4px;width:17.2px;height:17.2px;background:#3d3d3d;border:1px solid #292929;border-radius:4.500px"></div>
<div style="left:258.2px;top:599.4px;width:17.2px;height:17.2px;background:#2b2b2b;border:1px solid #262626;border-radius:4.500px"></div>
<svg style="left:181px;top:602px;" width="10" height="12" viewBox="0 0 10 12"><path d="M1.700 .5v5.300a3.300 3.300 0 0 0 6.600 0V.5" fill="none" stroke="#d4d4d4" stroke-width="1.100"/><path d="M1 10.500h8" stroke="#d4d4d4" stroke-width="1.100"/></svg>
<svg style="left:200.5px;top:602px;" width="11" height="12" viewBox="0 0 11 12"><path d="M8 3.300C7.500 1.800 6.500 1.300 5.500 1.300S3.300 1.800 3 3.300M3 8.700c.3 1.500 1.300 2 2.500 2s2.200-.5 2.500-2" fill="none" stroke="#d4d4d4" stroke-width="1.100"/><path d="M.5 6h10" stroke="#d4d4d4" stroke-width="1.100"/></svg>
<svg style="left:220.5px;top:602px;" width="11" height="12" viewBox="0 0 11 12"><path d="M1 2h7M4.500 2v8.500" fill="none" stroke="#d4d4d4" stroke-width="1.100"/><path d="M9.500 8v2.700" stroke="#d4d4d4" stroke-width="1.100"/></svg>
<svg style="left:240.5px;top:602px;" width="11" height="12" viewBox="0 0 11 12"><path d="M1 2h7M4.500 2v8.500" fill="none" stroke="#d4d4d4" stroke-width="1.100"/><path d="M9.800 1.500v2.700" stroke="#d4d4d4" stroke-width="1.100"/></svg>
<svg style="left:260.8px;top:602px;" width="12" height="12" viewBox="0 0 12 12"><rect x="5.100" y="0" width="1.800" height="3" fill="#e8e8e8" transform="rotate(0 6 6)"/><rect x="5.100" y="0" width="1.800" height="3" fill="#e8e8e8" transform="rotate(45 6 6)"/><rect x="5.100" y="0" width="1.800" height="3" fill="#e8e8e8" transform="rotate(90 6 6)"/><rect x="5.100" y="0" width="1.800" height="3" fill="#e8e8e8" transform="rotate(135 6 6)"/><rect x="5.100" y="0" width="1.800" height="3" fill="#e8e8e8" transform="rotate(180 6 6)"/><rect x="5.100" y="0" width="1.800" height="3" fill="#e8e8e8" transform="rotate(225 6 6)"/><rect x="5.100" y="0" width="1.800" height="3" fill="#e8e8e8" transform="rotate(270 6 6)"/><rect x="5.100" y="0" width="1.800" height="3" fill="#e8e8e8" transform="rotate(315 6 6)"/><circle cx="6" cy="6" r="4" fill="#e8e8e8"/><circle cx="6" cy="6" r="2.300" fill="#2b2b2b"/></svg>
<div style="left:14.5px;top:626.0px;width:9px;height:9px;border:1.2px solid #8a8a8a;border-radius:50%"></div>
<div class="t" style="left:30px;top:622.5px;height:16px;line-height:16px;letter-spacing:-0.19px;color:#e4e4e4">Alignment</div>
<div style="left:177.2px;top:621px;width:75px;height:18px;background:#646464;border-radius:4.500px"></div>
<div style="left:178.3px;top:622.2px;width:15.7px;height:15.6px;background:#2b2b2b;border-radius:3.500px"></div>
<div style="left:181px;top:624.9px;width:10px;height:1.3px;background:#2fc85f"></div>
<div style="left:181px;top:628.9499999999999px;width:5px;height:1.3px;background:#2fc85f"></div>
<div style="left:181px;top:633.0px;width:7px;height:1.3px;background:#2fc85f"></div>
<div style="left:200px;top:624.9px;width:10px;height:1.3px;background:#e0e0e0"></div>
<div style="left:203px;top:628.9499999999999px;width:4px;height:1.3px;background:#e0e0e0"></div>
<div style="left:201px;top:633.0px;width:8px;height:1.3px;background:#e0e0e0"></div>
<div style="left:219px;top:624.9px;width:10.199999999999989px;height:1.3px;background:#e0e0e0"></div>
<div style="left:224px;top:628.9499999999999px;width:5.199999999999989px;height:1.3px;background:#e0e0e0"></div>
<div style="left:222px;top:633.0px;width:7.199999999999989px;height:1.3px;background:#e0e0e0"></div>
<div style="left:238px;top:624.9px;width:10.199999999999989px;height:1.3px;background:#e0e0e0"></div>
<div style="left:238px;top:628.9499999999999px;width:10.199999999999989px;height:1.3px;background:#e0e0e0"></div>
<div style="left:238px;top:633.0px;width:10.199999999999989px;height:1.3px;background:#e0e0e0"></div>
<div style="left:14.5px;top:648.0px;width:9px;height:9px;border:1.2px solid #8a8a8a;border-radius:50%"></div>
<div class="t" style="left:30px;top:644.5px;height:16px;line-height:16px;letter-spacing:-0.13px;color:#e4e4e4">Vertical Alignment</div>
<div style="left:177.2px;top:643px;width:75px;height:18px;background:#646464;border-radius:4.500px"></div>
<div style="left:178.3px;top:644.2px;width:15.7px;height:15.6px;background:#2b2b2b;border-radius:3.500px"></div>
<svg style="left:179.5px;top:645px;" width="13" height="14" viewBox="0 0 13 14"><path d="M.5 1.500h11" stroke="#2fc85f" stroke-width="1.300"/><path d="M6 13V4.500M2.800 7.700 6 4.500l3.200 3.200" fill="none" stroke="#2fc85f" stroke-width="1.300"/></svg>
<svg style="left:198.5px;top:644px;" width="13" height="16" viewBox="0 0 13 16"><path d="M.5 7.500h11" stroke="#e0e0e0" stroke-width="1.200"/><path d="M6 .300v5.200M3.800 3.300 6 5.500l2.200-2.200M6 14.800V9.600M3.800 11.800 6 9.600l2.200 2.200" fill="none" stroke="#e0e0e0" stroke-width="1.100"/></svg>
<svg style="left:217.5px;top:644px;" width="13" height="16" viewBox="0 0 13 16"><path d="M.5 12.500h11" stroke="#e0e0e0" stroke-width="1.300"/><path d="M6 1v9M2.800 6.800 6 10l3.200-3.200" fill="none" stroke="#e0e0e0" stroke-width="1.200"/></svg>
<svg style="left:236.5px;top:644px;" width="13" height="16" viewBox="0 0 13 16"><path d="M2.300 11 6.200 2.200 10.100 11M3.600 8h5.200" fill="none" stroke="#e0e0e0" stroke-width="1.200"/><path d="M.5 13.500h11.500" stroke="#e0e0e0" stroke-width="1.300"/></svg>
<div style="left:14.5px;top:670.0px;width:9px;height:9px;border:1.2px solid #8a8a8a;border-radius:50%"></div>
<div class="t" style="left:30px;top:666.5px;height:16px;line-height:16px;letter-spacing:-0.45px;color:#e4e4e4">Character Spacing</div>
<div style="left:178px;top:667.3px;width:92.5px;height:13.8px;background:#2a2a2a;border-radius:3px"></div>
<div class="t" style="left:181px;top:666.8px;height:16px;line-height:16px;color:#666;font-size:12.5px">C</div>
<div class="t" style="left:194px;top:666.9px;height:16px;line-height:16px;letter-spacing:-0.33px;color:#e4e4e4">0.0</div>
<div style="left:14.5px;top:692.0px;width:9px;height:9px;border:1.2px solid #8a8a8a;border-radius:50%"></div>
<div class="t" style="left:30px;top:688.5px;height:16px;line-height:16px;letter-spacing:-0.45px;color:#e4e4e4">Word Spacing</div>
<div style="left:178px;top:689.3px;width:92.5px;height:13.8px;background:#2a2a2a;border-radius:3px"></div>
<div class="t" style="left:179.5px;top:688.8px;height:16px;line-height:16px;color:#666;font-size:12.5px">W</div>
<div class="t" style="left:194px;top:688.9px;height:16px;line-height:16px;letter-spacing:-0.33px;color:#e4e4e4">0.0</div>
<div style="left:14.5px;top:714.0px;width:9px;height:9px;border:1.2px solid #8a8a8a;border-radius:50%"></div>
<div class="t" style="left:30px;top:710.5px;height:16px;line-height:16px;letter-spacing:-0.61px;color:#e4e4e4">Line Spacing</div>
<div style="left:178px;top:711.3px;width:92.5px;height:13.8px;background:#2a2a2a;border-radius:3px"></div>
<div class="t" style="left:181px;top:710.8px;height:16px;line-height:16px;color:#666;font-size:12.5px">L</div>
<div class="t" style="left:194px;top:710.9px;height:16px;line-height:16px;letter-spacing:-0.33px;color:#e4e4e4">0.0</div>
<div style="left:14.5px;top:736.0px;width:9px;height:9px;border:1.2px solid #8a8a8a;border-radius:50%"></div>
<div class="t" style="left:30px;top:732.5px;height:16px;line-height:16px;letter-spacing:-0.60px;color:#e4e4e4">Paragraph Spacing</div>
<div style="left:178px;top:733.3px;width:92.5px;height:13.8px;background:#2a2a2a;border-radius:3px"></div>
<div class="t" style="left:181px;top:732.8px;height:16px;line-height:16px;color:#666;font-size:12.5px">P</div>
<div class="t" style="left:194px;top:732.9px;height:16px;line-height:16px;letter-spacing:-0.33px;color:#e4e4e4">0.0</div>
<div style="left:14.5px;top:758.0px;width:9px;height:9px;border:1.2px solid #8a8a8a;border-radius:50%"></div>
<div class="t" style="left:30px;top:754.5px;height:16px;line-height:16px;letter-spacing:-0.60px;color:#e4e4e4">Text Box Size</div>
<div style="left:178px;top:755.3px;width:92.5px;height:13.8px;background:#2a2a2a;border-radius:3px"></div>
<div class="t" style="left:179.5px;top:754.8px;height:16px;line-height:16px;color:#666;font-size:12.5px">W</div>
<div class="t" style="left:194px;top:754.9px;height:16px;line-height:16px;letter-spacing:-0.26px;color:#e4e4e4">600.0</div>
<div style="left:277px;top:755.3px;width:93.5px;height:13.8px;background:#2a2a2a;border-radius:3px"></div>
<div class="t" style="left:280px;top:754.8px;height:16px;line-height:16px;color:#666;font-size:12.5px">H</div>
<div class="t" style="left:293px;top:754.9px;height:16px;line-height:16px;letter-spacing:-0.16px;color:#e4e4e4">300.0</div>
<div class="t" style="left:392px;top:754.5px;height:16px;line-height:16px;letter-spacing:-0.00px;">Auto</div>
<div style="left:424px;top:755px;width:16px;height:15.5px;background:#2a2a2a;border-radius:3px"></div>
<div class="t" style="left:445px;top:754.5px;height:16px;line-height:16px;">/</div>
<div style="left:453px;top:755px;width:16px;height:15.5px;background:#2a2a2a;border-radius:3px"></div>
<div style="left:14.5px;top:780.0px;width:9px;height:9px;border:1.2px solid #8a8a8a;border-radius:50%"></div>
<div class="t" style="left:30px;top:776.5px;height:16px;line-height:16px;letter-spacing:-0.33px;color:#e4e4e4">Shrink to Fit Text Box</div>
<div style="left:178px;top:776.5px;width:15.5px;height:15.5px;background:#2a2a2a;border-radius:3px"></div>
<div style="left:14.5px;top:802.0px;width:9px;height:9px;border:1.2px solid #8a8a8a;border-radius:50%"></div>
<div class="t" style="left:30px;top:798.5px;height:16px;line-height:16px;letter-spacing:-0.26px;color:#a8a8a8">Allow Word Breaks</div>
<div style="left:178px;top:798.5px;width:15.5px;height:15.5px;background:#2a2a2a;border-radius:3px"></div>
<svg style="left:179px;top:799.5px;" width="14" height="14" viewBox="0 0 14 14"><path d="M2 7.2 5.4 10.6 12 2.8" fill="none" stroke="#e0e0e0" stroke-width="1.9"/></svg>
<div style="left:14.5px;top:824.0px;width:9px;height:9px;border:1.2px solid #8a8a8a;border-radius:50%"></div>
<div class="t" style="left:30px;top:820.5px;height:16px;line-height:16px;letter-spacing:-0.37px;color:#e4e4e4">Avoid Orphans</div>
<div style="left:178px;top:820.5px;width:15.5px;height:15.5px;background:#2a2a2a;border-radius:3px"></div>
<div style="left:14.5px;top:846.0px;width:9px;height:9px;border:1.2px solid #8a8a8a;border-radius:50%"></div>
<div class="t" style="left:30px;top:842.5px;height:16px;line-height:16px;letter-spacing:-0.44px;color:#e4e4e4">Force Monospacing</div>
<div style="left:178px;top:843.3px;width:92.5px;height:13.8px;background:#2a2a2a;border-radius:3px"></div>
<div class="t" style="left:181px;top:842.8px;height:16px;line-height:16px;color:#666;font-size:12.5px">#</div>
<div class="t" style="left:194px;top:842.9px;height:16px;line-height:16px;letter-spacing:-0.46px;color:#e4e4e4">1.0</div>
<div style="left:277px;top:842.5px;width:15.5px;height:15.5px;background:#2a2a2a;border-radius:3px"></div>
<div style="left:8px;top:863px;width:466px;height:1px;background:#2a2a2a"></div>
<div style="left:13px;top:867px;width:459px;height:20px;background:#4e4e4e;border-radius:3px"></div>
<div class="t" style="left:30px;top:869.5px;height:16px;line-height:16px;letter-spacing:-0.19px;">String Manipulators</div>
<div style="left:178px;top:870.3px;width:92.5px;height:13.8px;background:#2a2a2a;border-radius:3px"></div>
<svg style="left:180px;top:871.8px;" width="10" height="12" viewBox="0 0 10 12"><path d="M0 1h10M0 4.300h7M0 7.600h10M0 10.900h7" stroke="#b8b8b8" stroke-width=".9"/></svg>
<div class="t" style="left:194px;top:869.7px;height:16px;line-height:16px;color:#b0b0b0">0</div>
<div class="t" style="left:30px;top:891.5px;height:16px;line-height:16px;letter-spacing:-0.40px;">Style Behaviours</div>
<div style="left:178px;top:892.3px;width:92.5px;height:13.8px;background:#2a2a2a;border-radius:3px"></div>
<svg style="left:180px;top:893.8px;" width="10" height="12" viewBox="0 0 10 12"><path d="M0 1h10M0 4.300h7M0 7.600h10M0 10.900h7" stroke="#b8b8b8" stroke-width=".9"/></svg>
<div class="t" style="left:194px;top:891.7px;height:16px;line-height:16px;color:#b0b0b0">0</div>
<div class="t" style="left:30px;top:913.5px;height:16px;line-height:16px;letter-spacing:-0.22px;">Material Behaviours</div>
<div style="left:178px;top:914.3px;width:92.5px;height:13.8px;background:#2a2a2a;border-radius:3px"></div>
<svg style="left:180px;top:915.8px;" width="10" height="12" viewBox="0 0 10 12"><path d="M0 1h10M0 4.300h7M0 7.600h10M0 10.900h7" stroke="#b8b8b8" stroke-width=".9"/></svg>
<div class="t" style="left:194px;top:913.7px;height:16px;line-height:16px;color:#b0b0b0">0</div>
<div class="t" style="left:30px;top:935.5px;height:16px;line-height:16px;letter-spacing:-0.19px;">Formatting Inputs</div>
<div style="left:178px;top:936.3px;width:92.5px;height:13.8px;background:#2a2a2a;border-radius:3px"></div>
<svg style="left:180px;top:937.8px;" width="10" height="12" viewBox="0 0 10 12"><path d="M0 1h10M0 4.300h7M0 7.600h10M0 10.900h7" stroke="#b8b8b8" stroke-width=".9"/></svg>
<div class="t" style="left:194px;top:935.7px;height:16px;line-height:16px;color:#b0b0b0">0</div>
<div style="left:10px;top:863px;width:263.5px;height:27.5px;border:3px solid #b4e61e"></div>
<div class="btn2" style="left:275px;top:869px;width:13.5px;height:16px;"></div>
<svg style="left:277px;top:872px;" width="10" height="10" viewBox="0 0 10 10"><path d="M4.5 0v9M0 4.5h9" stroke="#e8e8e8" stroke-width="1.6"/></svg>
<svg style="left:285px;top:882px;" width="4" height="4" viewBox="0 0 4 4"><path d="M4 0v4H0z" fill="#6fc8a8"/></svg>
<div style="left:8px;top:955.5px;width:466px;height:1px;background:#2a2a2a"></div>
<div style="left:14.5px;top:966.0px;width:9px;height:9px;border:1.2px solid #8a8a8a;border-radius:50%"></div>
<div class="t" style="left:30px;top:962.5px;height:16px;line-height:16px;letter-spacing:-0.46px;color:#e4e4e4">Text Path</div>
<div style="left:178px;top:961px;width:293px;height:18.5px;background:#323232;border-radius:3px"></div>
<div class="t" style="left:181.5px;top:962.5px;height:16px;line-height:16px;color:#555">C</div>
<div class="t" style="left:194px;top:962.5px;height:16px;line-height:16px;letter-spacing:-0.42px;color:#6a6a6a">Drag in a Shape</div>
<div style="left:14.5px;top:988.0px;width:9px;height:9px;border:1.2px solid #8a8a8a;border-radius:50%"></div>
<div class="t" style="left:30px;top:984.5px;height:16px;line-height:16px;letter-spacing:-0.48px;color:#e4e4e4">Path Travel</div>
<div style="left:178px;top:985.3px;width:92.5px;height:13.8px;background:#2a2a2a;border-radius:3px"></div>
<div class="t" style="left:181px;top:984.8px;height:16px;line-height:16px;color:#666;font-size:10.5px">%</div>
<div class="t" style="left:194px;top:984.9px;height:16px;line-height:16px;letter-spacing:-0.33px;color:#e4e4e4">0.0</div>
<div style="left:14.5px;top:1010.0px;width:9px;height:9px;border:1.2px solid #8a8a8a;border-radius:50%"></div>
<div class="t" style="left:30px;top:1006.5px;height:16px;line-height:16px;letter-spacing:-0.52px;color:#e4e4e4">Path Loop</div>
<div style="left:178px;top:1006.5px;width:15.5px;height:15.5px;background:#2a2a2a;border-radius:3px"></div>
<!-- tools -->
<div style="left:494px;top:85px;width:30px;height:528px;background:#444"></div>
<div style="left:503.5px;top:89px;width:2px;height:2px;background:#7c7c7c"></div>
<div style="left:508px;top:89px;width:2px;height:2px;background:#7c7c7c"></div>
<div style="left:512.5px;top:89px;width:2px;height:2px;background:#7c7c7c"></div>
<div style="left:495px;top:96px;width:28px;height:28px;background:#1a1a1a;border-radius:5px"></div>
<svg style="left:497px;top:98px;" width="24" height="24" viewBox="0 0 24 24"><path d="M7 3.5v15l3.6-3.2 2.3 5 2.4-1.1-2.3-4.9 4.8-.4z" fill="none" stroke="#2fc85f" stroke-width="1.4" stroke-linejoin="round"/></svg>
<svg style="left:497px;top:128px;" width="24" height="24" viewBox="0 0 24 24"><path d="M6 2.5v18l14-7.2z" fill="#e2e2e2" transform="rotate(-8 12 12)"/></svg>
<svg style="left:497px;top:158px;" width="24" height="24" viewBox="0 0 24 24"><path d="M4 3.5l9.5 2.6 4.2 7-4 4-7-4.2z" fill="#e2e2e2"/><path d="M14.8 18.2l4-4 1.6 1.6-4 4z" fill="#e2e2e2"/><circle cx="10.5" cy="10" r="1.4" fill="#444"/><path d="M4 3.5l6 6" stroke="#444" stroke-width="1"/></svg>
<svg style="left:497px;top:187px;" width="24" height="24" viewBox="0 0 24 24"><path d="M16.5 3.2a2 2 0 0 1 2.9 2.9L8 17.5l-3.6 1.3-1.6 1.7-.6-.6 1.7-1.6L5.2 14.7z" fill="#e2e2e2"/><path d="M15 5.2l2.8 2.8" stroke="#444" stroke-width="1"/></svg>
<svg style="left:497px;top:218px;" width="24" height="24" viewBox="0 0 24 24"><rect x="2.5" y="7" width="12.5" height="11" rx="1.5" fill="#e2e2e2"/><path d="M15.5 11.5 21.5 8v9.5l-6-3.5z" fill="#e2e2e2"/><rect x="4.5" y="4.2" width="6.5" height="1.6" fill="#e2e2e2"/><circle cx="5.6" cy="10" r="1.2" fill="#444"/></svg>
<svg style="left:497px;top:247px;" width="24" height="24" viewBox="0 0 24 24"><path d="M4 20 20 4.5" stroke="#e2e2e2" stroke-width="1.3"/></svg>
<svg style="left:497px;top:278px;" width="24" height="24" viewBox="0 0 24 24"><path d="M5 4.5h14v3.2h-5.2V20h-3.6V7.7H5z" fill="#e2e2e2"/></svg>
<svg style="left:497px;top:308px;" width="24" height="24" viewBox="0 0 24 24"><path d="M4 4.5v11l3-2.4 1.8 3.8 1.7-.8-1.8-3.7 3.6-.3z" fill="#e2e2e2"/><path d="M12 4.5l7.5-1 1.3 16.5H4" fill="none" stroke="#e2e2e2" stroke-width="1.1" stroke-dasharray="3 2.2"/><rect x="18" y="2" width="2.6" height="2.6" fill="#e2e2e2"/><rect x="19.5" y="18.6" width="2.6" height="2.6" fill="#e2e2e2"/><rect x="2.6" y="18.6" width="2.6" height="2.6" fill="#e2e2e2"/></svg>
<svg style="left:497px;top:338px;" width="24" height="24" viewBox="0 0 24 24"><rect x="5" y="5" width="14" height="14" fill="#e2e2e2"/></svg>
<svg style="left:497px;top:368px;" width="24" height="24" viewBox="0 0 24 24"><circle cx="12" cy="12" r="7.8" fill="#e2e2e2"/></svg>
<svg style="left:497px;top:397px;" width="24" height="24" viewBox="0 0 24 24"><path d="M12 3.8 20.4 10l-3.2 9.8H6.8L3.600 10z" fill="#e2e2e2"/></svg>
<svg style="left:497px;top:427px;" width="24" height="24" viewBox="0 0 24 24"><path d="M12 2.8l2.6 6.2 6.700.5-5.100 4.400 1.600 6.600L12 17l-5.800 3.500 1.600-6.600L2.700 9.500 9.400 9z" fill="#e2e2e2"/></svg>
<svg style="left:497px;top:458px;" width="24" height="24" viewBox="0 0 24 24"><path d="M7 9.500A6 6 0 1 1 13 18.300" fill="none" stroke="#e2e2e2" stroke-width="2.600"/></svg>
<svg style="left:497px;top:487px;" width="24" height="24" viewBox="0 0 24 24"><path d="M12 2.500C13 8 16 11 21.500 12 16 13 13 16 12 21.500 11 16 8 13 2.500 12 8 11 11 8 12 2.500z" fill="#e2e2e2"/></svg>
<svg style="left:497px;top:517px;" width="24" height="24" viewBox="0 0 24 24"><rect x="10.2" y="2.5" width="3.6" height="5" fill="#e2e2e2" transform="rotate(0 12 12)"/><rect x="10.2" y="2.5" width="3.6" height="5" fill="#e2e2e2" transform="rotate(45 12 12)"/><rect x="10.2" y="2.5" width="3.6" height="5" fill="#e2e2e2" transform="rotate(90 12 12)"/><rect x="10.2" y="2.5" width="3.6" height="5" fill="#e2e2e2" transform="rotate(135 12 12)"/><rect x="10.2" y="2.5" width="3.6" height="5" fill="#e2e2e2" transform="rotate(180 12 12)"/><rect x="10.2" y="2.5" width="3.6" height="5" fill="#e2e2e2" transform="rotate(225 12 12)"/><rect x="10.2" y="2.5" width="3.6" height="5" fill="#e2e2e2" transform="rotate(270 12 12)"/><rect x="10.2" y="2.5" width="3.6" height="5" fill="#e2e2e2" transform="rotate(315 12 12)"/><circle cx="12" cy="12" r="6.8" fill="#e2e2e2"/><circle cx="12" cy="12" r="3" fill="#444"/></svg>
<svg style="left:497px;top:547px;" width="24" height="24" viewBox="0 0 24 24"><path d="M1.500 12l6-5v3.600h9V7l6 5-6 5v-3.600h-9V17z" fill="#e2e2e2"/></svg>
<svg style="left:497px;top:577px;" width="24" height="24" viewBox="0 0 24 24"><rect x="2" y="8.500" width="20" height="7" rx="3.500" fill="#e2e2e2"/></svg>
<!-- viewport -->
<div class="tab" style="left:530px;top:85px;width:77px;height:22px;"></div>
<div class="t" style="left:535px;top:89.0px;height:16px;line-height:16px;letter-spacing:-0.42px;">Typing Text 2</div>
<div style="left:530px;top:107px;width:1057px;height:20px;background:#444"></div>
<div style="left:530px;top:127px;width:20px;height:464px;background:#444"></div>
<div style="left:530px;top:591px;width:1057px;height:22px;background:#444"></div>
<div style="left:550px;top:127px;width:1037px;height:464px;background:#000;overflow:hidden"></div>
<div style="left:677px;top:139px;width:782px;height:440px;background:#fff"></div>
<div style="left:549px;top:107px;width:1038px;height:20px;overflow:hidden">
<div style="left:0;top:16px;width:1038px;height:4px;background:repeating-linear-gradient(90deg,#8a8a8a 0,#8a8a8a 1px,transparent 1px,transparent 12.22px);background-position:5.759999999999973px 0"></div>
<div style="left:30.2px;top:12px;width:1px;height:8px;background:#9a9a9a"></div>
<div class="t rl" style="left:0.7px;width:60px;text-align:center;top:1px;height:12px;line-height:12px">-1200</div>
<div style="left:91.3px;top:12px;width:1px;height:8px;background:#9a9a9a"></div>
<div class="t rl" style="left:61.8px;width:60px;text-align:center;top:1px;height:12px;line-height:12px">-1050</div>
<div style="left:152.4px;top:12px;width:1px;height:8px;background:#9a9a9a"></div>
<div class="t rl" style="left:122.9px;width:60px;text-align:center;top:1px;height:12px;line-height:12px">-900</div>
<div style="left:213.5px;top:12px;width:1px;height:8px;background:#9a9a9a"></div>
<div class="t rl" style="left:184.0px;width:60px;text-align:center;top:1px;height:12px;line-height:12px">-750</div>
<div style="left:274.6px;top:12px;width:1px;height:8px;background:#9a9a9a"></div>
<div class="t rl" style="left:245.1px;width:60px;text-align:center;top:1px;height:12px;line-height:12px">-600</div>
<div style="left:335.7px;top:12px;width:1px;height:8px;background:#9a9a9a"></div>
<div class="t rl" style="left:306.2px;width:60px;text-align:center;top:1px;height:12px;line-height:12px">-450</div>
<div style="left:396.8px;top:12px;width:1px;height:8px;background:#9a9a9a"></div>
<div class="t rl" style="left:367.3px;width:60px;text-align:center;top:1px;height:12px;line-height:12px">-300</div>
<div style="left:457.9px;top:12px;width:1px;height:8px;background:#9a9a9a"></div>
<div class="t rl" style="left:428.4px;width:60px;text-align:center;top:1px;height:12px;line-height:12px">-150</div>
<div style="left:519.0px;top:12px;width:1px;height:8px;background:#9a9a9a"></div>
<div class="t rl" style="left:489.5px;width:60px;text-align:center;top:1px;height:12px;line-height:12px">0</div>
<div style="left:580.1px;top:12px;width:1px;height:8px;background:#9a9a9a"></div>
<div class="t rl" style="left:550.6px;width:60px;text-align:center;top:1px;height:12px;line-height:12px">150</div>
<div style="left:641.2px;top:12px;width:1px;height:8px;background:#9a9a9a"></div>
<div class="t rl" style="left:611.7px;width:60px;text-align:center;top:1px;height:12px;line-height:12px">300</div>
<div style="left:702.3px;top:12px;width:1px;height:8px;background:#9a9a9a"></div>
<div class="t rl" style="left:672.8px;width:60px;text-align:center;top:1px;height:12px;line-height:12px">450</div>
<div style="left:763.4px;top:12px;width:1px;height:8px;background:#9a9a9a"></div>
<div class="t rl" style="left:733.9px;width:60px;text-align:center;top:1px;height:12px;line-height:12px">600</div>
<div style="left:824.5px;top:12px;width:1px;height:8px;background:#9a9a9a"></div>
<div class="t rl" style="left:795.0px;width:60px;text-align:center;top:1px;height:12px;line-height:12px">750</div>
<div style="left:885.6px;top:12px;width:1px;height:8px;background:#9a9a9a"></div>
<div class="t rl" style="left:856.1px;width:60px;text-align:center;top:1px;height:12px;line-height:12px">900</div>
<div style="left:946.7px;top:12px;width:1px;height:8px;background:#9a9a9a"></div>
<div class="t rl" style="left:917.2px;width:60px;text-align:center;top:1px;height:12px;line-height:12px">1050</div>
<div style="left:1007.8px;top:12px;width:1px;height:8px;background:#9a9a9a"></div>
<div class="t rl" style="left:978.3px;width:60px;text-align:center;top:1px;height:12px;line-height:12px">1200</div>
</div>
<div class="t rl" style="left:535.5px;top:109.0px;height:16px;line-height:16px;">px</div>
<div style="left:530px;top:127px;width:20px;height:464px;overflow:hidden">
<div style="left:16px;top:0;width:4px;height:464px;background:repeating-linear-gradient(180deg,#808080 0,#808080 1.300px,transparent 1.300px,transparent 12.22px);background-position:0 11.19px"></div>
<div style="left:12px;top:414.6px;width:8px;height:1px;background:#9a9a9a"></div>
<div class="t rl" style="left:-22.7px;width:60px;text-align:center;top:409.1px;height:12px;line-height:12px;transform:rotate(-90deg)">-450</div>
<div style="left:12px;top:353.5px;width:8px;height:1px;background:#9a9a9a"></div>
<div class="t rl" style="left:-22.7px;width:60px;text-align:center;top:348.0px;height:12px;line-height:12px;transform:rotate(-90deg)">-300</div>
<div style="left:12px;top:292.4px;width:8px;height:1px;background:#9a9a9a"></div>
<div class="t rl" style="left:-22.7px;width:60px;text-align:center;top:286.9px;height:12px;line-height:12px;transform:rotate(-90deg)">-150</div>
<div style="left:12px;top:231.3px;width:8px;height:1px;background:#9a9a9a"></div>
<div class="t rl" style="left:-22.7px;width:60px;text-align:center;top:225.8px;height:12px;line-height:12px;transform:rotate(-90deg)">0</div>
<div style="left:12px;top:170.2px;width:8px;height:1px;background:#9a9a9a"></div>
<div class="t rl" style="left:-22.7px;width:60px;text-align:center;top:164.7px;height:12px;line-height:12px;transform:rotate(-90deg)">150</div>
<div style="left:12px;top:109.1px;width:8px;height:1px;background:#9a9a9a"></div>
<div class="t rl" style="left:-22.7px;width:60px;text-align:center;top:103.6px;height:12px;line-height:12px;transform:rotate(-90deg)">300</div>
<div style="left:12px;top:48.0px;width:8px;height:1px;background:#9a9a9a"></div>
<div class="t rl" style="left:-22.7px;width:60px;text-align:center;top:42.5px;height:12px;line-height:12px;transform:rotate(-90deg)">450</div>
</div>
<div class="t" style="left:804px;top:325px;height:60px;line-height:60px;font-size:49.5px;font-weight:bold;color:#666;letter-spacing:0;-webkit-text-stroke:1.1px #666;transform:scaleX(1.108);transform-origin:0 50%">Cavalry Typing Text</div>
<div style="left:1322.5px;top:331px;width:7px;height:47px;background:#666"></div>
<div style="left:1068px;top:370px;width:194.5px;height:162.5px;border:1.2px solid #4fd389"></div>
<div style="left:1064.5px;top:367.0px;width:7px;height:7px;background:#fff;border:1.1px solid #4fd389"></div>
<div style="left:1258.5px;top:367.0px;width:7px;height:7px;background:#fff;border:1.1px solid #4fd389"></div>
<div style="left:1064.5px;top:528.5px;width:7px;height:7px;background:#fff;border:1.1px solid #4fd389"></div>
<div style="left:1258.5px;top:528.5px;width:7px;height:7px;background:#fff;border:1.1px solid #4fd389"></div>
<div style="left:1072.5px;top:368px;width:7px;height:45.5px;border:1px solid #6f74b8;background:rgba(255,255,255,.25)"></div>
<div style="left:1068px;top:354.5px;width:9px;height:9px;background:#b58df2;border-radius:1.5px"></div>
<div style="left:1065.5px;top:356.2px;width:5.5px;height:5.5px;border:1px solid #444;border-radius:50%"></div>
<div class="t" style="left:1080px;top:351.5px;height:16px;line-height:16px;letter-spacing:-0.09px;color:#fff;text-shadow:0 0 1px #000,0 0 1px #000,1px 0 0 #000,-1px 0 0 #000,0 1px 0 #000,0 -1px 0 #000">Cavalry Typing Text</div>
<div class="t" style="left:569px;top:493.0px;height:16px;line-height:16px;letter-spacing:-0.52px;color:#f4f4f4">Hold S</div>
<div class="t" style="left:605.6px;top:493.0px;height:16px;line-height:16px;letter-spacing:-0.30px;color:rgba(150,150,150,.62)">Direct Layer Selection</div>
<div class="t" style="left:569px;top:507.0px;height:16px;line-height:16px;letter-spacing:-0.85px;color:#f4f4f4">Space</div>
<div class="t" style="left:602.9px;top:507.0px;height:16px;line-height:16px;letter-spacing:-0.39px;color:rgba(150,150,150,.62)">Play/ Stop</div>
<div class="t" style="left:569px;top:521.0px;height:16px;line-height:16px;letter-spacing:-0.57px;color:#f4f4f4">Space + click + drag</div>
<div class="t" style="left:674.2px;top:521.0px;height:16px;line-height:16px;letter-spacing:-0.98px;color:rgba(150,150,150,.62)">Pan</div>
<div class="t" style="left:569px;top:535.0px;height:16px;line-height:16px;letter-spacing:-0.33px;color:#f4f4f4">Alt + click + drag</div>
<div class="t" style="left:658.7px;top:535.0px;height:16px;line-height:16px;letter-spacing:-0.22px;color:rgba(150,150,150,.62)">Move Pivot Point</div>
<div class="t" style="left:569px;top:549.0px;height:16px;line-height:16px;letter-spacing:-0.08px;color:#f4f4f4">Shift</div>
<div class="t" style="left:596.6px;top:549.0px;height:16px;line-height:16px;letter-spacing:-0.62px;color:rgba(150,150,150,.62)">Enable Snapping</div>
<div class="t" style="left:569px;top:569.0px;height:16px;line-height:16px;letter-spacing:-0.10px;color:#f4f4f4">00:00:03:28</div>
<div style="left:549px;top:127px;width:1038px;height:452px;overflow:hidden">
<div class="t" style="left:449px;top:442.5px;height:16px;line-height:16px;color:#111;letter-spacing:-.05px;text-shadow:0 0 1px #fff,0 0 1px #fff,1px 0 0 #fff,-1px 0 0 #fff,0 1px 0 #fff,0 -1px 0 #fff">Viewport Quality: High</div>
</div>
<div style="left:535px;top:594px;width:78px;height:16.5px;background:#2c2c2c;border:1px solid #555;border-radius:3px"></div>
<div class="t" style="left:538px;top:594.5px;height:16px;line-height:16px;letter-spacing:-0.51px;">41%</div>
<svg style="left:599px;top:599px;" width="10" height="7" viewBox="0 0 10 7"><path d="M1 1.200l4 4 4-4" fill="none" stroke="#d0d0d0" stroke-width="1.1"/></svg>
<div class="btn2" style="left:867px;top:593px;width:98.5px;height:18px;"></div>
<div style="left:886.7px;top:594px;width:1px;height:16px;background:#3a3a3a"></div>
<div style="left:906.4px;top:594px;width:1px;height:16px;background:#3a3a3a"></div>
<div style="left:926.1px;top:594px;width:1px;height:16px;background:#3a3a3a"></div>
<div style="left:945.8px;top:594px;width:1px;height:16px;background:#3a3a3a"></div>
<svg style="left:867.8px;top:593px;" width="18" height="18" viewBox="0 0 18 18"><rect x="4" y="4" width="1.6" height="10" fill="#e4e4e4"/><path d="M14.500 4v10L6.500 9z" fill="#e4e4e4"/></svg>
<svg style="left:887.5px;top:593px;" width="18" height="18" viewBox="0 0 18 18"><path d="M11 4v10L3.500 9z" fill="#e4e4e4"/><rect x="12.500" y="4" width="1.800" height="10" fill="#e4e4e4"/></svg>
<svg style="left:907.1999999999999px;top:593px;" width="18" height="18" viewBox="0 0 18 18"><path d="M5.500 3.500v11L14.500 9z" fill="#e4e4e4"/></svg>
<svg style="left:926.9px;top:593px;" width="18" height="18" viewBox="0 0 18 18"><rect x="4" y="4" width="1.800" height="10" fill="#e4e4e4"/><path d="M7.500 4v10L15 9z" fill="#e4e4e4"/></svg>
<svg style="left:946.5999999999999px;top:593px;" width="18" height="18" viewBox="0 0 18 18"><path d="M4 4v10l8-5z" fill="#e4e4e4"/><rect x="12.800" y="4" width="1.600" height="10" fill="#e4e4e4"/></svg>
<div class="btn2" style="left:971.5px;top:593px;width:19.5px;height:18px;"></div>
<svg style="left:973.5px;top:595px;" width="16" height="14" viewBox="0 0 16 14"><path d="M8 4H3a1.500 1.500 0 0 0-1.500 1.500v5A1.500 1.500 0 0 0 3 12h10a1.500 1.500 0 0 0 1.500-1.500V7" fill="none" stroke="#e4e4e4" stroke-width="1.400"/><path d="M7 1.200 11.500 4 7 6.800z" fill="#e4e4e4"/></svg>
<div class="btn2" style="left:1232px;top:593px;width:36.5px;height:18px;"></div>
<svg style="left:1235px;top:597.5px;" width="14" height="9" viewBox="0 0 14 9"><path d="M4 0h9.500v9H4L0 4.500z" fill="#e4e4e4"/><circle cx="4" cy="4.500" r="1.200" fill="#2f2f2f"/></svg>
<div class="t" style="left:1257px;top:594.5px;height:16px;line-height:16px;color:#9a9a9a">0</div>
<div class="btn2" style="left:1272px;top:593px;width:31px;height:18px;"></div>
<svg style="left:1275px;top:596px;" width="14" height="12" viewBox="0 0 14 12"><path d="M0 4h3l4-3.500v11L3 8H0z" fill="#2fc85f"/><path d="M9 3.500a3.500 3.500 0 0 1 0 5M10.800 1.500a6 6 0 0 1 0 9" fill="none" stroke="#2fc85f" stroke-width="1.200"/></svg>
<svg style="left:1293.5px;top:598.5px;" width="6" height="8" viewBox="0 0 6 8"><path d="M0 0l5 3.500L0 7z" fill="none" stroke="#8a8a8a" stroke-width="1"/></svg>
<div class="btn2" style="left:1307px;top:593px;width:31px;height:18px;"></div>
<svg style="left:1310px;top:596.5px;" width="13" height="12" viewBox="0 0 13 12"><path d="M7.930 10.170 10.050 8.050A3.600 3.600 0 0 0 4.950 2.950L2.830 5.070" fill="none" stroke="#e4e4e4" stroke-width="1.900"/></svg>
<svg style="left:1328.5px;top:598.5px;" width="6" height="8" viewBox="0 0 6 8"><path d="M0 0l5 3.500L0 7z" fill="none" stroke="#8a8a8a" stroke-width="1"/></svg>
<div class="btn2" style="left:1342.5px;top:593px;width:31px;height:18px;"></div>
<svg style="left:1345px;top:595.5px;" width="14" height="14" viewBox="0 0 14 14"><path d="M4.500 0v14M9.500 0v14M0 4.500h14M0 9.500h14" stroke="#e4e4e4" stroke-width="1.200"/></svg>
<svg style="left:1364px;top:598.5px;" width="6" height="8" viewBox="0 0 6 8"><path d="M0 0l5 3.500L0 7z" fill="none" stroke="#8a8a8a" stroke-width="1"/></svg>
<div class="btn2" style="left:1377px;top:593px;width:20px;height:18px;"></div>
<svg style="left:1379.5px;top:596px;" width="15" height="12" viewBox="0 0 15 12"><rect x="0" y="0" width="15" height="3" fill="#2fc85f"/><rect x="0" y="4.500" width="4" height="7.500" fill="#2fc85f"/><rect x="5.500" y="4.500" width="9.500" height="3" fill="#2fc85f"/><rect x="5.500" y="9" width="9.500" height="3" fill="#2fc85f"/></svg>
<div class="btn2" style="left:1400.5px;top:593px;width:19px;height:18px;"></div>
<svg style="left:1402.5px;top:597.3px;" width="15" height="9.4" viewBox="0 0 15 9.4"><path d="M0 0h2.200l3.300 4.700L2.200 9.400H0l3.300-4.700zM4.700 0h2.200l3.300 4.700-3.300 4.700H4.700L8 4.700zM9.400 0h2.200l3.300 4.700-3.300 4.700H9.400l3.300-4.700z" fill="#e4e4e4"/></svg>
<div class="btn2" style="left:1424px;top:593px;width:30.5px;height:18px;"></div>
<svg style="left:1426.5px;top:596px;" width="15" height="12" viewBox="0 0 15 12"><rect x=".8" y=".8" width="13.400" height="8.400" fill="none" stroke="#e4e4e4" stroke-width="1.500"/><rect x="0" y="10.200" width="15" height="1.800" fill="#c8c8c8"/></svg>
<svg style="left:1445.5px;top:598.5px;" width="6" height="8" viewBox="0 0 6 8"><path d="M0 0l5 3.500L0 7z" fill="none" stroke="#8a8a8a" stroke-width="1"/></svg>
<div class="btn2" style="left:1458px;top:593px;width:31px;height:18px;"></div>
<svg style="left:1461px;top:595.5px;" width="14" height="13" viewBox="0 0 14 13"><rect x=".6" y=".6" width="8.500" height="6.500" fill="none" stroke="#9a9a9a" stroke-width="1.200"/><rect x="2.600" y="3" width="8.500" height="6.500" fill="#2f2f2f" stroke="#9a9a9a" stroke-width="1.200"/><rect x="4.800" y="5.500" width="8.500" height="6.500" fill="#2f2f2f" stroke="#9a9a9a" stroke-width="1.200"/></svg>
<svg style="left:1480px;top:598.5px;" width="6" height="8" viewBox="0 0 6 8"><path d="M0 0l5 3.500L0 7z" fill="none" stroke="#8a8a8a" stroke-width="1"/></svg>
<div class="btn2" style="left:1493px;top:593px;width:31px;height:18px;"></div>
<svg style="left:1495.5px;top:595px;" width="15" height="15" viewBox="0 0 15 15"><rect x=".5" y=".5" width="9" height="9" fill="#8a8a8a"/><rect x="5" y="5" width="9" height="9" fill="#2f2f2f" stroke="#e4e4e4" stroke-width="1.200"/></svg>
<svg style="left:1515px;top:598.5px;" width="6" height="8" viewBox="0 0 6 8"><path d="M0 0l5 3.500L0 7z" fill="none" stroke="#8a8a8a" stroke-width="1"/></svg>
<div class="btn2" style="left:1528px;top:593px;width:31px;height:18px;"></div>
<svg style="left:1531px;top:596.5px;" width="12" height="12" viewBox="0 0 12 12"><rect x="0" y="0" width="3" height="3" fill="#2fc85f"/><rect x="0" y="6" width="3" height="3" fill="#2fc85f"/><rect x="3" y="3" width="3" height="3" fill="#2fc85f"/><rect x="3" y="9" width="3" height="3" fill="#2fc85f"/><rect x="6" y="0" width="3" height="3" fill="#2fc85f"/><rect x="6" y="6" width="3" height="3" fill="#2fc85f"/><rect x="9" y="3" width="3" height="3" fill="#2fc85f"/><rect x="9" y="9" width="3" height="3" fill="#2fc85f"/></svg>
<svg style="left:1550px;top:598.5px;" width="6" height="8" viewBox="0 0 6 8"><path d="M0 0l5 3.500L0 7z" fill="none" stroke="#8a8a8a" stroke-width="1"/></svg>
<div style="left:1291.4px;top:594px;width:1px;height:16px;background:#3d3d3d"></div>
<div style="left:1325.8px;top:594px;width:1px;height:16px;background:#3d3d3d"></div>
<div style="left:1361.0px;top:594px;width:1px;height:16px;background:#3d3d3d"></div>
<div style="left:1441.2px;top:594px;width:1px;height:16px;background:#3d3d3d"></div>
<div style="left:1476.4px;top:594px;width:1px;height:16px;background:#3d3d3d"></div>
<div style="left:1511.5px;top:594px;width:1px;height:16px;background:#3d3d3d"></div>
<div style="left:1546.7px;top:594px;width:1px;height:16px;background:#3d3d3d"></div>
<div class="btn2" style="left:1563px;top:593px;width:19.5px;height:18px;"></div>
<svg style="left:1566px;top:595.5px;" width="14" height="14" viewBox="0 0 14 14"><rect x="5.8" y="0" width="2.400" height="3.500" fill="#e4e4e4" transform="rotate(0 7 7)"/><rect x="5.8" y="0" width="2.400" height="3.500" fill="#e4e4e4" transform="rotate(45 7 7)"/><rect x="5.8" y="0" width="2.400" height="3.500" fill="#e4e4e4" transform="rotate(90 7 7)"/><rect x="5.8" y="0" width="2.400" height="3.500" fill="#e4e4e4" transform="rotate(135 7 7)"/><rect x="5.8" y="0" width="2.400" height="3.500" fill="#e4e4e4" transform="rotate(180 7 7)"/><rect x="5.8" y="0" width="2.400" height="3.500" fill="#e4e4e4" transform="rotate(225 7 7)"/><rect x="5.8" y="0" width="2.400" height="3.500" fill="#e4e4e4" transform="rotate(270 7 7)"/><rect x="5.8" y="0" width="2.400" height="3.500" fill="#e4e4e4" transform="rotate(315 7 7)"/><circle cx="7" cy="7" r="4.800" fill="#e4e4e4"/><circle cx="7" cy="7" r="2.200" fill="#2f2f2f"/></svg>
<!-- color -->
<div class="tab" style="left:1593px;top:85px;width:40px;height:22px;"></div>
<div class="t" style="left:1598px;top:89.0px;height:16px;line-height:16px;letter-spacing:-0.05px;">Color</div>
<div style="left:1634px;top:85px;width:69px;height:22px;background:#2c2c2c;border-radius:4px 4px 0 0"></div>
<div class="t" style="left:1639px;top:89.0px;height:16px;line-height:16px;letter-spacing:-0.47px;">Add Layers</div>
<div style="left:1593px;top:107px;width:321px;height:410px;background:#444"></div>
<div style="left:1900px;top:107px;width:14px;height:410px;background:#2e2e2e"></div>
<div style="left:1902.5px;top:109px;width:8.5px;height:355px;background:#555;border-radius:4px"></div>
<div style="left:1646px;top:120px;width:200px;height:200px;border-radius:50%;background:conic-gradient(from 90deg,#f00 0,#f0f 16.67%,#00f 33.33%,#0ff 50%,#0f0 66.67%,#ff0 83.33%,#f00 100%);-webkit-mask:radial-gradient(circle,transparent 74.5px,#000 75.3px,#000 99.5px,transparent 100.3px);mask:radial-gradient(circle,transparent 74.5px,#000 75.3px,#000 99.5px,transparent 100.3px)"></div>
<div style="left:1702px;top:176px;width:90px;height:90px;background:linear-gradient(90deg,#000,rgba(0,0,0,0)),linear-gradient(180deg,#fff,#f00)"></div>
<div style="left:1738.5px;top:169.5px;width:13px;height:13px;border:1.2px solid #e8e8e8;border-radius:50%"></div>
<div style="left:1826.5px;top:213.5px;width:13px;height:13px;border:1.2px solid #fff;border-radius:50%"></div>
<div style="left:1600px;top:333px;width:22px;height:22px;background:#7a7a7a;border-radius:3px"></div>
<div class="t" style="left:1625px;top:337.0px;height:16px;line-height:16px;letter-spacing:-0.52px;">Gray</div>
<div class="btn2" style="left:1871px;top:333px;width:21.5px;height:22px;"></div>
<svg style="left:1875px;top:337px;" width="14" height="14" viewBox="0 0 14 14"><path d="M10.200 .900a1.900 1.900 0 0 1 2.700 2.700l-1.100 1.100.7.700-1.300 1.300-.6-.600-.9.900-2.900-2.900.9-.900-.6-.600 1.300-1.300.7.700z" fill="#e0e0e0"/><path d="M7.700 5.300 2 11l-.9 2 2-.9 5.700-5.700" fill="none" stroke="#e0e0e0" stroke-width="1.100" stroke-linejoin="round"/></svg>
<div class="sel" style="left:1600px;top:361px;width:50px;height:17px;"></div>
<div class="t" style="left:1603px;top:362.0px;height:16px;line-height:16px;letter-spacing:-0.41px;">Hex</div>
<svg style="left:1635.5px;top:366px;" width="10" height="7" viewBox="0 0 10 7"><path d="M1 1.200l4 4 4-4" fill="none" stroke="#d0d0d0" stroke-width="1.1"/></svg>
<div style="left:1653px;top:358px;width:240px;height:22px;background:#2a2a2a;border-radius:3px"></div>
<div class="t" style="left:1658px;top:362.0px;height:16px;line-height:16px;color:#555">#</div>
<div class="t" style="left:1670px;top:362.0px;height:16px;line-height:16px;letter-spacing:-0.45px;">7a7a7a</div>
<div style="left:1600px;top:390px;width:234px;height:4.5px;background:#e2e2e2;border-radius:2px"></div>
<div style="left:1828.5px;top:386.8px;width:11px;height:11px;background:#6cc9a8;border-radius:50%"></div>
<div style="left:1831.5px;top:389.8px;width:5px;height:5px;background:#4a9a80;border-radius:50%"></div>
<div style="left:1849px;top:384px;width:44px;height:16px;background:#2a2a2a;border-radius:3px"></div>
<div class="t" style="left:1853px;top:384.5px;height:16px;line-height:16px;color:#555">A</div>
<div class="t" style="left:1866px;top:384.5px;height:16px;line-height:16px;letter-spacing:0.05px;">255</div>
<div style="left:1597px;top:406px;width:299px;height:22px;background:#222"></div>
<div style="left:1599px;top:408px;width:148px;height:20px;background:#444;border-radius:5px 5px 0 0"></div>
<div style="left:1747px;top:409px;width:147px;height:19px;background:#2b2b2b;border-radius:5px 5px 0 0"></div>
<div class="t" style="left:1523.0px;width:300px;text-align:center;top:410.5px;height:16px;line-height:16px;letter-spacing:-0.56px;">Swatches</div>
<div class="t" style="left:1671.0px;width:300px;text-align:center;top:410.5px;height:16px;line-height:16px;letter-spacing:-0.20px;color:#c4c4c4">Generator</div>
<div style="left:1598px;top:431.5px;width:257px;height:17px;background:#626262;border-radius:4px"></div>
<div style="left:1599px;top:432.5px;width:62px;height:15px;background:#262626;border-radius:3px"></div>
<svg style="left:1605px;top:435px;" width="11" height="10" viewBox="0 0 11 10"><path d="M1 0v10M4 0v10" stroke="#2fc85f" stroke-width="1.600"/><path d="M6.500.300 9.800 10" stroke="#2fc85f" stroke-width="1.600"/></svg>
<div class="t" style="left:1621px;top:433.0px;height:16px;line-height:16px;letter-spacing:-0.10px;">Library</div>
<svg style="left:1671px;top:435px;" width="11" height="10" viewBox="0 0 11 10"><path d="M0 1h4l1 1.500h6V10H0z" fill="#d8d8d8"/><path d="M2 5h1.500M4.500 5h4.500M2 7.500h1.500M4.500 7.500h4.500" stroke="#626262" stroke-width="1"/></svg>
<div class="t" style="left:1686px;top:433.0px;height:16px;line-height:16px;letter-spacing:-0.13px;">Project</div>
<svg style="left:1738px;top:434.5px;" width="9" height="11" viewBox="0 0 9 11"><path d="M.6.600h4.900l3 3v6.800H.6z" fill="none" stroke="#d8d8d8" stroke-width="1.100"/><path d="M5.500.600v3h3" fill="none" stroke="#d8d8d8" stroke-width="1"/></svg>
<div class="t" style="left:1752px;top:433.0px;height:16px;line-height:16px;letter-spacing:-0.89px;">Scene</div>
<svg style="left:1801px;top:435px;" width="11" height="11" viewBox="0 0 11 11"><path d="M3.500.600h4a3 3 0 0 1 3 3V6L6 10.500H3.500a3 3 0 0 1-3-3v-4a3 3 0 0 1 3-3z" fill="none" stroke="#d8d8d8" stroke-width="1.100"/><path d="M10.500 6H8a2 2 0 0 0-2 2v2.500" fill="none" stroke="#d8d8d8" stroke-width="1"/></svg>
<div class="t" style="left:1816px;top:433.0px;height:16px;line-height:16px;letter-spacing:-0.56px;">Labels</div>
<div style="left:1858px;top:431.5px;width:37.5px;height:17px;background:#626262;border-radius:4px"></div>
<div style="left:1859px;top:432.5px;width:16.5px;height:15px;background:#262626;border-radius:3px"></div>
<svg style="left:1862.5px;top:435.5px;" width="10" height="10" viewBox="0 0 10 10"><g fill="#2fc85f"><rect x="0" y="0" width="3.800" height="3.800" rx=".8"/><rect x="5.700" y="0" width="3.800" height="3.800" rx=".8"/><rect x="0" y="5.700" width="3.800" height="3.800" rx=".8"/><rect x="5.700" y="5.700" width="3.800" height="3.800" rx=".8"/></g></svg>
<svg style="left:1880px;top:436px;" width="11" height="9" viewBox="0 0 11 9"><path d="M0 .800h11M0 4.300h11M0 7.800h11" stroke="#e0e0e0" stroke-width="1.200"/></svg>
<div style="left:1598px;top:452.5px;width:275px;height:17px;background:#4c4c4c;border:1px solid #5a5a5a;border-radius:3px"></div>
<div class="t" style="left:1601px;top:453.5px;height:16px;line-height:16px;letter-spacing:0.06px;">Bright</div>
<svg style="left:1860px;top:458px;" width="10" height="7" viewBox="0 0 10 7"><path d="M1 1.200l4 4 4-4" fill="none" stroke="#d0d0d0" stroke-width="1.1"/></svg>
<div style="left:1880px;top:460.5px;width:2px;height:2px;background:#e0e0e0;border-radius:.5px"></div>
<div style="left:1884.8px;top:460.5px;width:2px;height:2px;background:#e0e0e0;border-radius:.5px"></div>
<div style="left:1889.6px;top:460.5px;width:2px;height:2px;background:#e0e0e0;border-radius:.5px"></div>
<div style="left:1598px;top:469.5px;width:297px;height:47.5px;background:#262626"></div>
<div style="left:1600px;top:472px;width:18px;height:18px;background:#a463c4;border-radius:3px"></div>
<div style="left:1622px;top:472px;width:18px;height:18px;background:#0cc6f1;border-radius:3px"></div>
<div style="left:1644px;top:472px;width:18px;height:18px;background:#f4e30c;border-radius:3px"></div>
<div style="left:1666px;top:472px;width:18px;height:18px;background:#f17707;border-radius:3px"></div>
<div style="left:1688px;top:472px;width:18px;height:18px;background:#f00a0a;border-radius:3px"></div>
<div class="tab" style="left:1593px;top:523px;width:38px;height:22px;"></div>
<div class="t" style="left:1598px;top:527.0px;height:16px;line-height:16px;letter-spacing:-0.06px;">Align</div>
<div style="left:1593px;top:545px;width:321px;height:68px;background:#444"></div>
<div class="t" style="left:1601px;top:557.0px;height:16px;line-height:16px;letter-spacing:-0.18px;">Alignment</div>
<div class="t" style="left:1601px;top:585.0px;height:16px;line-height:16px;letter-spacing:0.12px;">Distribution</div>
<div class="btn2" style="left:1790px;top:556px;width:53px;height:17px;"></div>
<div class="btn2" style="left:1852px;top:556px;width:53px;height:17px;"></div>
<div class="btn2" style="left:1790px;top:584px;width:53px;height:17px;"></div>
<div style="left:1807.5px;top:557px;width:1px;height:15px;background:#3a3a3a"></div>
<div style="left:1825.5px;top:557px;width:1px;height:15px;background:#3a3a3a"></div>
<div style="left:1869.5px;top:557px;width:1px;height:15px;background:#3a3a3a"></div>
<div style="left:1887.5px;top:557px;width:1px;height:15px;background:#3a3a3a"></div>
<div style="left:1807.5px;top:585px;width:1px;height:15px;background:#3a3a3a"></div>
<div style="left:1825.5px;top:585px;width:1px;height:15px;background:#3a3a3a"></div>
<svg style="left:1793px;top:558px;" width="13" height="13" viewBox="0 0 13 13"><path d="M1 0v13" stroke="#e4e4e4" stroke-width="1.300"/><path d="M3.500 4h6M3.500 9h9" stroke="#e4e4e4" stroke-width="1.800"/></svg>
<svg style="left:1811px;top:558px;" width="13" height="13" viewBox="0 0 13 13"><path d="M6.500 0v13" stroke="#e4e4e4" stroke-width="1.300"/><path d="M3 4h7M1 9h11" stroke="#e4e4e4" stroke-width="1.800"/></svg>
<svg style="left:1829px;top:558px;" width="13" height="13" viewBox="0 0 13 13"><path d="M12 0v13" stroke="#e4e4e4" stroke-width="1.300"/><path d="M3.500 4h6M.5 9h9" stroke="#e4e4e4" stroke-width="1.800"/></svg>
<svg style="left:1855px;top:558px;" width="13" height="13" viewBox="0 0 13 13"><path d="M0 1h13" stroke="#e4e4e4" stroke-width="1.300"/><path d="M4 3.500v9M9 3.500v5" stroke="#e4e4e4" stroke-width="1.800"/></svg>
<svg style="left:1873px;top:558px;" width="13" height="13" viewBox="0 0 13 13"><path d="M0 6.500h13" stroke="#e4e4e4" stroke-width="1.300"/><path d="M4 1v11M9 3v7" stroke="#e4e4e4" stroke-width="1.800"/></svg>
<svg style="left:1891px;top:558px;" width="13" height="13" viewBox="0 0 13 13"><path d="M0 12h13" stroke="#e4e4e4" stroke-width="1.300"/><path d="M4 .5v9M9 4.500v5" stroke="#e4e4e4" stroke-width="1.800"/></svg>
<svg style="left:1793px;top:586px;" width="13" height="13" viewBox="0 0 13 13"><path d="M1.500 0v13M11 1.500v10" stroke="#e4e4e4" stroke-width="1.400"/><path d="M6.500 2v9" stroke="#e4e4e4" stroke-width="2.200"/></svg>
<svg style="left:1811px;top:586px;" width="13" height="13" viewBox="0 0 13 13"><path d="M0 1h13M0 12h13" stroke="#e4e4e4" stroke-width="1.300"/><path d="M2 6.500h9" stroke="#e4e4e4" stroke-width="1.800"/></svg>
<svg style="left:1829px;top:586px;" width="13" height="13" viewBox="0 0 13 13"><path d="M.5 8v4M3.500 8v4M6 5.500v4M8.500 5.500v4M11 2v4" stroke="#e4e4e4" stroke-width="1.500"/><path d="M0 .6h2.500M10.500.600H13M0 12.400h2.500M10.500 12.400H13M.6 0v2.500M12.400 0v2.500M.6 10.500V13M12.400 10.500V13" stroke="#e4e4e4" stroke-width="1"/></svg>
<!-- timeline -->
<div class="tab" style="left:494px;top:620px;width:89px;height:21px;"></div>
<div class="t" style="left:499px;top:623.0px;height:16px;line-height:16px;letter-spacing:-0.42px;">Scene Window</div>
<div class="tab2" style="left:584px;top:620px;width:100px;height:21px;"></div>
<div class="t" style="left:589px;top:623.0px;height:16px;line-height:16px;letter-spacing:-0.29px;">JavaScript Editor</div>
<div class="tab2" style="left:685px;top:620px;width:112px;height:21px;"></div>
<div class="t" style="left:690px;top:623.0px;height:16px;line-height:16px;letter-spacing:-0.43px;">Dependency Graph</div>
<div style="left:494px;top:641px;width:1420px;height:22px;background:#2a2a2a"></div>
<div class="t" style="left:573.0px;width:300px;text-align:center;top:645.0px;height:16px;line-height:16px;letter-spacing:-0.33px;color:#c8c8c8">Jumping Text Coloring</div>
<svg style="left:952px;top:649px;" width="8" height="8" viewBox="0 0 8 8"><path d="M.5.500l7 7M7.500.500l-7 7" stroke="#bdbdbd" stroke-width="1"/></svg>
<div style="left:969px;top:647px;width:1px;height:11px;background:#9a9a9a"></div>
<div style="left:494px;top:663px;width:458px;height:42px;background:#444"></div>
<div style="left:494px;top:705px;width:458px;height:258px;background:#2b2b2b"></div>
<div style="left:494px;top:705px;width:444px;height:22px;background:#383838"></div>
<div style="left:494px;top:727px;width:444px;height:22px;background:#383838"></div>
<div style="left:494px;top:727.6px;width:442px;height:20.7px;background:#4d4a5d;border-radius:0 4px 4px 0"></div>
<div style="left:494px;top:749px;width:444px;height:22px;background:#383838"></div>
<div class="pill" style="left:496.5px;top:665.5px;width:247px;height:19.5px;"></div>
<svg style="left:500px;top:668px;" width="14" height="14" viewBox="0 0 14 14"><circle cx="6" cy="6" r="5" fill="none" stroke="#dcdcdc" stroke-width="1.2"/><path d="M9.8 9.8l3 3" stroke="#dcdcdc" stroke-width="2" stroke-linecap="round"/></svg>
<div class="t ph" style="left:520px;top:667.5px;height:16px;line-height:16px;letter-spacing:-0.48px;">Enter a layer name</div>
<div class="btn2" style="left:746.5px;top:666px;width:19.5px;height:19px;"></div>
<svg style="left:750.5px;top:670px;" width="11" height="11" viewBox="0 0 11 11"><path d="M5 0v10M0 5h10" stroke="#f0f0f0" stroke-width="1.700"/></svg>
<svg style="left:761.5px;top:680.5px;" width="4" height="4" viewBox="0 0 4 4"><path d="M4 0v4H0z" fill="#6fc8a8"/></svg>
<div class="btn2" style="left:790px;top:666px;width:19.5px;height:19px;"></div>
<div class="btn2" style="left:812px;top:666px;width:19.5px;height:19px;"></div>
<div class="btn2" style="left:834px;top:666px;width:19.5px;height:19px;"></div>
<svg style="left:792.5px;top:668.5px;" width="15" height="14" viewBox="0 0 15 14"><circle cx="10" cy="4.500" r="4" fill="#e0e0e0"/><circle cx="7" cy="7.500" r="4" fill="#9a9a9a" opacity=".8"/><circle cx="4.500" cy="10" r="3.500" fill="#6a6a6a" opacity=".8"/></svg>
<svg style="left:815px;top:669px;" width="14" height="14" viewBox="0 0 14 14"><g fill="#e0e0e0"><circle cx="1.500" cy="1.800" r="1"/><circle cx="6.500" cy="1.500" r="1.100"/><circle cx="1.600" cy="7" r="1.100"/><path d="M7.300 4.200l.8 2.600 2.600.8-2.600.8-.8 2.600-.8-2.600-2.600-.8 2.600-.8z"/></g><path d="M13.500 10.500v3h-3z" fill="#6fc8a8"/></svg>
<svg style="left:837px;top:669px;" width="14" height="14" viewBox="0 0 14 14"><path d="M0 2h14M0 7h14M0 12h14" stroke="#e0e0e0" stroke-width="1" stroke-dasharray="3.500 3 7.500 0"/><circle cx="5" cy="2" r="1.500" fill="#2f2f2f" stroke="#e0e0e0"/><circle cx="9.500" cy="7" r="1.500" fill="#2f2f2f" stroke="#e0e0e0"/><circle cx="5" cy="12" r="1.500" fill="#2f2f2f" stroke="#e0e0e0"/></svg>
<div style="left:856px;top:666px;width:94px;height:19px;background:#2a2a2a;border-radius:3px"></div>
<div class="t" style="left:862px;top:668.0px;height:16px;line-height:16px;color:#4a4a4a">F</div>
<div class="t" style="left:873px;top:668.0px;height:16px;line-height:16px;letter-spacing:0.52px;">118</div>
<svg style="left:500px;top:690px;" width="10" height="13" viewBox="0 0 10 13"><path d="M2.500 6V3.800a2.500 2.500 0 0 1 5 0V6" fill="none" stroke="#d0d0d0" stroke-width="1.300"/><rect x=".5" y="5.500" width="9" height="7" rx="1" fill="#d0d0d0"/><rect x="4.200" y="7.500" width="1.600" height="3" fill="#444"/></svg>
<svg style="left:517px;top:691.5px;" width="14" height="10" viewBox="0 0 14 10"><path d="M.5 5C3 1.300 11 1.300 13.500 5 11 8.700 3 8.700.5 5z" fill="none" stroke="#d0d0d0" stroke-width="1.100"/><circle cx="7" cy="5" r="2.200" fill="#bdbdbd"/></svg>
<svg style="left:537px;top:689.5px;" width="13" height="14" viewBox="0 0 13 14"><path d="M6.500.600 12.400 3.800v6.400L6.500 13.400.6 10.200V3.800z" fill="none" stroke="#d0d0d0" stroke-width="1.100"/><path d="M.6 3.800 6.500 7l5.900-3.200M6.500 7v6.400" fill="none" stroke="#d0d0d0" stroke-width="1.100"/></svg>
<svg style="left:555px;top:690.5px;" width="14" height="12" viewBox="0 0 14 12"><path d="M0 4h3l4-3.500v11L3 8H0z" fill="#d0d0d0"/><path d="M9 3.500a3.500 3.500 0 0 1 0 5M10.800 1.500a6 6 0 0 1 0 9" fill="none" stroke="#d0d0d0" stroke-width="1.200"/></svg>
<svg style="left:574.5px;top:689.5px;" width="14" height="14" viewBox="0 0 14 14"><path d="M10.200 .900a1.900 1.900 0 0 1 2.700 2.700l-1.100 1.100.7.700-1.300 1.300-.6-.600-.9.900-2.900-2.900.9-.900-.6-.600 1.300-1.300.7.700z" fill="#bdbdbd"/><path d="M7.700 5.300 2 11l-.9 2 2-.9 5.700-5.700" fill="none" stroke="#bdbdbd" stroke-width="1.100" stroke-linejoin="round"/></svg>
<svg style="left:593px;top:692px;" width="14" height="9" viewBox="0 0 14 9"><path d="M4.500 0H14v9H4.500L0 4.500z" fill="#d0d0d0"/><circle cx="4.500" cy="4.500" r="1.400" fill="#444"/></svg>
<div class="t" style="left:649px;top:689.0px;height:16px;line-height:16px;letter-spacing:-0.54px;">Name</div>
<div style="left:496px;top:707px;width:18px;height:18px;background:#292929;border-radius:3px"></div>
<div style="left:515px;top:707px;width:18px;height:18px;background:#292929;border-radius:3px"></div>
<div style="left:534px;top:707px;width:18px;height:18px;background:#292929;border-radius:3px"></div>
<div style="left:572.5px;top:707.5px;width:16.5px;height:16.5px;background:#b78ffb;border-radius:3px"></div>
<svg style="left:593px;top:711.5px;" width="14" height="9" viewBox="0 0 14 9"><path d="M4.500 0H14v9H4.500L0 4.500z" fill="#d8d8d8"/><circle cx="4.500" cy="4.500" r="1.400" fill="#383838"/></svg>
<div style="left:897.8px;top:708px;width:21.2px;height:15.8px;background:#2c2c2c;border-radius:4px"></div>
<svg style="left:899.5px;top:712.3px;" width="8" height="8" viewBox="0 0 8 8"><path d="M7.500 .5v6.500H4L.5 3.750 4 .5z" fill="#d9b75e"/></svg>
<svg style="left:910px;top:712.3px;" width="8" height="8" viewBox="0 0 8 8"><path d="M.5 .5H4l3.500 3.250L4 7H.5z" fill="#8c8c8c"/></svg>
<div style="left:924.4px;top:711.5px;width:9px;height:9px;border:1.100px solid #a8a8a8;border-radius:50%"></div>
<div style="left:496px;top:729px;width:18px;height:18px;background:#292929;border-radius:3px"></div>
<div style="left:515px;top:729px;width:18px;height:18px;background:#292929;border-radius:3px"></div>
<div style="left:534px;top:729px;width:18px;height:18px;background:#292929;border-radius:3px"></div>
<div style="left:572.5px;top:729.5px;width:16.5px;height:16.5px;background:#b78ffb;border-radius:3px"></div>
<svg style="left:593px;top:733.5px;" width="14" height="9" viewBox="0 0 14 9"><path d="M4.500 0H14v9H4.500L0 4.500z" fill="#d8d8d8"/><circle cx="4.500" cy="4.500" r="1.400" fill="#383838"/></svg>
<div style="left:897.8px;top:730px;width:21.2px;height:15.8px;background:#2c2c2c;border-radius:4px"></div>
<svg style="left:899.5px;top:734.3px;" width="8" height="8" viewBox="0 0 8 8"><path d="M7.500 .5v6.500H4L.5 3.750 4 .5z" fill="#7c7c7c"/></svg>
<svg style="left:910px;top:734.3px;" width="8" height="8" viewBox="0 0 8 8"><path d="M.5 .5H4l3.500 3.250L4 7H.5z" fill="#cd5de9"/></svg>
<div style="left:908.3px;top:730px;width:1px;height:15.8px;background:#3c3c3c"></div>
<div style="left:924.4px;top:733.5px;width:9px;height:9px;border:1.100px solid #a8a8a8;border-radius:50%"></div>
<div style="left:496px;top:751px;width:18px;height:18px;background:#292929;border-radius:3px"></div>
<div style="left:515px;top:751px;width:18px;height:18px;background:#292929;border-radius:3px"></div>
<div style="left:534px;top:751px;width:18px;height:18px;background:#292929;border-radius:3px"></div>
<div style="left:572.5px;top:751.5px;width:16.5px;height:16.5px;background:#b78ffb;border-radius:3px"></div>
<svg style="left:593px;top:755.5px;" width="14" height="9" viewBox="0 0 14 9"><path d="M4.500 0H14v9H4.500L0 4.500z" fill="#d8d8d8"/><circle cx="4.500" cy="4.500" r="1.400" fill="#383838"/></svg>
<div style="left:897.8px;top:752px;width:21.2px;height:15.8px;background:#2c2c2c;border-radius:4px"></div>
<svg style="left:899.5px;top:756.3px;" width="8" height="8" viewBox="0 0 8 8"><path d="M7.500 .5v6.500H4L.5 3.750 4 .5z" fill="#7c7c7c"/></svg>
<svg style="left:910px;top:756.3px;" width="8" height="8" viewBox="0 0 8 8"><path d="M.5 .5H4l3.500 3.250L4 7H.5z" fill="#cd5de9"/></svg>
<div style="left:908.3px;top:752px;width:1px;height:15.8px;background:#3c3c3c"></div>
<div style="left:924.4px;top:755.5px;width:9px;height:9px;border:1.100px solid #a8a8a8;border-radius:50%"></div>
<div style="left:897.8px;top:708px;width:10.4px;height:15.8px;border:1px solid #b89a50;border-radius:3px 0 0 3px"></div>
<svg style="left:517px;top:711px;" width="14" height="10" viewBox="0 0 14 10"><path d="M.5 5C3 1.300 11 1.300 13.500 5 11 8.700 3 8.700.5 5z" fill="none" stroke="#d0d0d0" stroke-width="1.100"/><circle cx="7" cy="5" r="2.200" fill="#bdbdbd"/></svg>
<div style="left:610px;top:707px;width:32px;height:18px;background:#343434;border-radius:3px"></div>
<svg style="left:613px;top:713px;" width="10" height="7" viewBox="0 0 10 7"><path d="M1 1.200l4 4 4-4" fill="none" stroke="#a8a8a8" stroke-width="1.100"/></svg>
<svg style="left:647px;top:708px;" width="16" height="16" viewBox="0 0 16 16"><rect x="1.500" y="1.500" width="13" height="13" fill="none" stroke="#d8d8d8" stroke-width="1"/><g fill="#f0f0f0"><rect x="0" y="0" width="2.600" height="2.600"/><rect x="13.400" y="0" width="2.600" height="2.600"/><rect x="0" y="13.400" width="2.600" height="2.600"/><rect x="13.400" y="13.400" width="2.600" height="2.600"/></g><path d="M4 4h8v2H9.100v6.200H6.900V6H4z" fill="#ecd86c"/></svg>
<div class="t" style="left:667px;top:709.0px;height:16px;line-height:16px;letter-spacing:-0.02px;">Main</div>
<div style="left:629px;top:729px;width:32px;height:18px;background:#363636;border-radius:3px"></div>
<svg style="left:632px;top:735px;" width="10" height="7" viewBox="0 0 10 7"><path d="M1 1.200l4 4 4-4" fill="none" stroke="#a8a8a8" stroke-width="1.100"/></svg>
<svg style="left:666px;top:730px;" width="16" height="16" viewBox="0 0 16 16"><rect x="1.500" y="1.500" width="13" height="13" fill="none" stroke="#d8d8d8" stroke-width="1"/><g fill="#f0f0f0"><rect x="0" y="0" width="2.600" height="2.600"/><rect x="13.400" y="0" width="2.600" height="2.600"/><rect x="0" y="13.400" width="2.600" height="2.600"/><rect x="13.400" y="13.400" width="2.600" height="2.600"/></g><path d="M4 4h8v2H9.100v6.200H6.900V6H4z" fill="#ecd86c"/></svg>
<div class="t" style="left:686px;top:731.0px;height:16px;line-height:16px;letter-spacing:-0.35px;color:#b4b4b8">Cavalry Typing Text</div>
<svg style="left:685px;top:752px;" width="16" height="16" viewBox="0 0 16 16"><rect x="1.500" y="1.500" width="13" height="13" fill="none" stroke="#d8d8d8" stroke-width="1"/><g fill="#f0f0f0"><rect x="0" y="0" width="2.600" height="2.600"/><rect x="13.400" y="0" width="2.600" height="2.600"/><rect x="0" y="13.400" width="2.600" height="2.600"/><rect x="13.400" y="13.400" width="2.600" height="2.600"/></g><path d="M4 4h8v2H9.100v6.200H6.900V6H4z" fill="#ecd86c"/></svg>
<div class="t" style="left:705px;top:753.0px;height:16px;line-height:16px;letter-spacing:-0.25px;color:#c4c4c4">Cursor</div>
<div style="left:620px;top:725px;width:208px;height:26px;border:3px solid #b4e61e"></div>
<div style="left:940px;top:706px;width:10px;height:254.5px;background:#4f4f4f;border-radius:5px"></div>
<div style="left:494px;top:962.5px;width:458px;height:13.5px;background:#2a2a2a"></div>
<div style="left:939px;top:962.5px;width:13px;height:13.5px;background:#262626"></div>
<div style="left:497px;top:964.2px;width:440px;height:9.6px;background:#4f4f4f;border-radius:5px"></div>
<div class="t" style="left:1043.0px;width:300px;text-align:center;top:645.0px;height:16px;line-height:16px;letter-spacing:-0.39px;color:#c8c8c8">Typing Text 01</div>
<svg style="left:1422px;top:649px;" width="8" height="8" viewBox="0 0 8 8"><path d="M.5.500l7 7M7.500.500l-7 7" stroke="#bdbdbd" stroke-width="1"/></svg>
<div style="left:1439px;top:642px;width:470px;height:21px;background:#444;border-radius:3px 3px 0 0"></div>
<div class="t" style="left:1513.0px;width:300px;text-align:center;top:645.0px;height:16px;line-height:16px;letter-spacing:-0.42px;">Typing Text 2</div>
<svg style="left:1892px;top:649px;" width="8" height="8" viewBox="0 0 8 8"><path d="M.5.500l7 7M7.500.500l-7 7" stroke="#bdbdbd" stroke-width="1"/></svg>
<div style="left:957px;top:663px;width:957px;height:300px;background:#272727"></div>
<div style="left:952px;top:687px;width:16px;height:276px;background:#1f1f1f"></div>
<div style="left:952px;top:663px;width:7px;height:313px;background:#1e1e1e"></div>
<div style="left:957px;top:663px;width:957px;height:24px;overflow:hidden">
<div style="left:10.899999999999977px;top:20.500px;width:950px;height:3.500px;background:repeating-linear-gradient(90deg,#8a8a8a 0,#8a8a8a 1px,transparent 1px,transparent 15.61px)"></div>
<div style="left:10.9px;top:17px;width:1px;height:7px;background:#9a9a9a"></div>
<div class="t" style="left:-18.9px;width:60px;text-align:center;top:1px;height:16px;line-height:16px;font-size:13px;color:#e0e0e0">0</div>
<div style="left:88.9px;top:17px;width:1px;height:7px;background:#9a9a9a"></div>
<div class="t" style="left:59.1px;width:60px;text-align:center;top:1px;height:16px;line-height:16px;font-size:13px;color:#e0e0e0">10</div>
<div style="left:167.0px;top:17px;width:1px;height:7px;background:#9a9a9a"></div>
<div class="t" style="left:137.2px;width:60px;text-align:center;top:1px;height:16px;line-height:16px;font-size:13px;color:#e0e0e0">20</div>
<div style="left:245.0px;top:17px;width:1px;height:7px;background:#9a9a9a"></div>
<div class="t" style="left:215.2px;width:60px;text-align:center;top:1px;height:16px;line-height:16px;font-size:13px;color:#e0e0e0">30</div>
<div style="left:323.1px;top:17px;width:1px;height:7px;background:#9a9a9a"></div>
<div class="t" style="left:293.3px;width:60px;text-align:center;top:1px;height:16px;line-height:16px;font-size:13px;color:#e0e0e0">40</div>
<div style="left:401.1px;top:17px;width:1px;height:7px;background:#9a9a9a"></div>
<div class="t" style="left:371.3px;width:60px;text-align:center;top:1px;height:16px;line-height:16px;font-size:13px;color:#e0e0e0">50</div>
<div style="left:479.2px;top:17px;width:1px;height:7px;background:#9a9a9a"></div>
<div class="t" style="left:449.4px;width:60px;text-align:center;top:1px;height:16px;line-height:16px;font-size:13px;color:#e0e0e0">60</div>
<div style="left:557.2px;top:17px;width:1px;height:7px;background:#9a9a9a"></div>
<div class="t" style="left:527.5px;width:60px;text-align:center;top:1px;height:16px;line-height:16px;font-size:13px;color:#e0e0e0">70</div>
<div style="left:635.3px;top:17px;width:1px;height:7px;background:#9a9a9a"></div>
<div class="t" style="left:605.5px;width:60px;text-align:center;top:1px;height:16px;line-height:16px;font-size:13px;color:#e0e0e0">80</div>
<div style="left:713.3px;top:17px;width:1px;height:7px;background:#9a9a9a"></div>
<div class="t" style="left:683.5px;width:60px;text-align:center;top:1px;height:16px;line-height:16px;font-size:13px;color:#e0e0e0">90</div>
<div style="left:791.4px;top:17px;width:1px;height:7px;background:#9a9a9a"></div>
<div class="t" style="left:761.6px;width:60px;text-align:center;top:1px;height:16px;line-height:16px;font-size:13px;color:#e0e0e0">100</div>
<div style="left:869.4px;top:17px;width:1px;height:7px;background:#9a9a9a"></div>
<div class="t" style="left:839.6px;width:60px;text-align:center;top:1px;height:16px;line-height:16px;font-size:13px;color:#e0e0e0">110</div>
<div style="left:947.5px;top:17px;width:1px;height:7px;background:#9a9a9a"></div>
<div class="t" style="left:917.7px;width:60px;text-align:center;top:1px;height:16px;line-height:16px;font-size:13px;color:#e0e0e0">120</div>
</div>
<div style="left:968px;top:687px;width:937.5px;height:16.2px;background:#454545"></div>
<div style="left:963.5px;top:686px;width:4.5px;height:18px;background:#6fcbb0;border-radius:1px"></div>
<div style="left:1905.2px;top:686px;width:4.8px;height:18px;background:#6fcbb0;border-radius:1px"></div>
<div style="left:968px;top:706.3px;width:946px;height:18.2px;background:#b895fb;border-radius:3px 0 0 3px"></div>
<div class="t" style="left:976.4px;top:707.5px;height:16px;line-height:16px;letter-spacing:-0.12px;color:#fff">Main</div>
<div style="left:968px;top:728.3px;width:946px;height:18.4px;background:conic-gradient(#a079ec 0 25%,#e6ccff 0 100%) 0 0/2px 2px;border:1.300px solid #fbf8ff;border-right:0;border-radius:3px 0 0 3px"></div>
<div class="t" style="left:976.4px;top:729.5px;height:16px;line-height:16px;letter-spacing:-0.26px;color:#fff">Cavalry Typing Text</div>
<div style="left:968px;top:750.3px;width:946px;height:18.3px;background:#b895fb;border-radius:3px 0 0 3px"></div>
<div class="t" style="left:976.4px;top:751.5px;height:16px;line-height:16px;letter-spacing:-0.32px;color:#fff">Cursor</div>
<div style="left:1905.5px;top:706px;width:8.5px;height:63px;background:rgba(20,10,40,.3)"></div>
<svg style="left:1881.8px;top:676.5px;" width="15" height="10" viewBox="0 0 15 10"><path d="M0 0h15L7.500 10z" fill="#6fcbb0"/></svg>
<div style="left:1888.8px;top:686px;width:1px;height:277px;background:#5fbfa0"></div>
<div style="left:959px;top:962.5px;width:955px;height:13.5px;background:#2a2a2a"></div>
<div style="left:986px;top:964.2px;width:840.5px;height:9.6px;background:#4f4f4f;border-radius:5px"></div>
<!-- status -->
<div style="left:494px;top:976px;width:458px;height:22px;background:#454545"></div>
<div style="left:959px;top:976px;width:955px;height:22px;background:#454545"></div>
<div class="btn2" style="left:497px;top:977.7px;width:19.5px;height:18px;"></div>
<svg style="left:500px;top:983px;" width="14" height="9" viewBox="0 0 14 9"><path d="M4.500 0H14v9H4.500L0 4.500z" fill="#e0e0e0"/><circle cx="4.500" cy="4.500" r="1.400" fill="#2f2f2f"/></svg>
<div class="t" style="left:520px;top:980.0px;height:16px;line-height:16px;letter-spacing:-0.45px;">1 selected</div>
<div class="btn2" style="left:743px;top:977.7px;width:20px;height:18px;"></div>
<svg style="left:747px;top:980.8px;" width="12" height="12" viewBox="0 0 12 12"><rect x=".7" y=".7" width="10.600" height="10.600" fill="none" stroke="#e0e0e0" stroke-width="1.200"/><circle cx="6" cy="6" r="1.800" fill="#e0e0e0"/></svg>
<div style="left:767px;top:977.7px;width:181px;height:18px;background:#626262;border-radius:4px"></div>
<div style="left:768px;top:978.7px;width:86px;height:16px;background:#262626;border-radius:3px"></div>
<svg style="left:773px;top:982px;" width="13" height="11" viewBox="0 0 13 11"><path d="M2 1h11M0 5.500h8M3 10h9" stroke="#2fc85f" stroke-width="1.800"/></svg>
<div class="t" style="left:789px;top:980.0px;height:16px;line-height:16px;letter-spacing:-0.27px;">Time Editor</div>
<svg style="left:861px;top:980.8px;" width="13" height="12" viewBox="0 0 13 12"><path d="M1.500 0v10.500H13" fill="none" stroke="#d0d0d0" stroke-width="1.200"/><path d="M1.500 10.500 12 2.500M4 7.500h7" fill="none" stroke="#d0d0d0" stroke-width="1"/></svg>
<div class="t" style="left:878px;top:980.0px;height:16px;line-height:16px;letter-spacing:-0.28px;">Graph Editor</div>
<div style="left:962.4px;top:977.7px;width:17.4px;height:17.2px;background:#262626;border-radius:5px"></div>
<svg style="left:964px;top:981.3px;" width="14" height="13" viewBox="0 0 14 13"><path d="M0 1h15M0 5h15" stroke="#e0e0e0" stroke-width="1.800"/><path d="M0 10h4M6 10h2M10 10h2" stroke="#e0e0e0" stroke-width="1.800"/><path d="M15 9.500v3.500h-3.500z" fill="#6fc8a8"/></svg>
<div style="left:983px;top:979px;width:150px;height:17px;background:#2a2a2a;border-radius:3px"></div>
<div class="t" style="left:985.5px;top:980.0px;height:16px;line-height:16px;letter-spacing:-0.36px;">Default Keyframe Layer</div>
<div style="left:1139px;top:979px;width:69px;height:17px;background:#2a2a2a;border-radius:3px"></div>
<div class="t" style="left:1145px;top:980.0px;height:16px;line-height:16px;color:#4a4a4a">F</div>
<div class="t" style="left:1157px;top:980.0px;height:16px;line-height:16px;">-</div>
<div class="t" style="left:1215px;top:980.0px;height:16px;line-height:16px;letter-spacing:-0.28px;">Align:</div>
<div class="btn2" style="left:1251.5px;top:977.7px;width:52.5px;height:18px;"></div>
<div style="left:1268.5px;top:978.7px;width:1px;height:16px;background:#3c3c3c"></div>
<div style="left:1286px;top:978.7px;width:1px;height:16px;background:#3c3c3c"></div>
<svg style="left:1254px;top:980.8px;" width="13" height="12" viewBox="0 0 13 12"><path d="M.8 0v12" stroke="#e4e4e4" stroke-width="1.200"/><path d="M6.500 3h3M6.500 9h5.500" stroke="#e4e4e4" stroke-width="1.700"/><rect x="3" y="2" width="2" height="2" fill="#6fd0b0"/><rect x="3" y="8" width="2" height="2" fill="#6fd0b0"/></svg>
<svg style="left:1271px;top:980.8px;" width="13" height="12" viewBox="0 0 13 12"><path d="M6.500 0v12" stroke="#e4e4e4" stroke-width="1.100"/><path d="M2.500 3h2M8.500 3h2M1 9h3.500M8.500 9H12" stroke="#e4e4e4" stroke-width="1.700"/><rect x="5.500" y="2" width="2" height="2" fill="#6fd0b0"/><rect x="5.500" y="8" width="2" height="2" fill="#6fd0b0"/></svg>
<svg style="left:1288.5px;top:980.8px;" width="13" height="12" viewBox="0 0 13 12"><path d="M12.200 0v12" stroke="#e4e4e4" stroke-width="1.200"/><path d="M3.500 3h3M1 9h5.500" stroke="#e4e4e4" stroke-width="1.700"/><rect x="8" y="2" width="2" height="2" fill="#6fd0b0"/><rect x="8" y="8" width="2" height="2" fill="#6fd0b0"/></svg>
<div class="btn2" style="left:1308.5px;top:977.7px;width:17.5px;height:18px;"></div>
<svg style="left:1311px;top:980.8px;" width="12" height="12" viewBox="0 0 12 12"><rect x=".7" y=".7" width="10.600" height="10.600" fill="none" stroke="#e4e4e4" stroke-width="1.200" stroke-dasharray="2.500 1.500"/><rect x="4.500" y="4.500" width="3" height="3" fill="#e4e4e4"/></svg>
<div class="btn2" style="left:1329.5px;top:977.7px;width:31px;height:18px;"></div>
<svg style="left:1332px;top:980.8px;" width="13" height="12" viewBox="0 0 13 12"><path d="M7.930 10.170 10.050 8.050A3.600 3.600 0 0 0 4.950 2.950L2.830 5.070" fill="none" stroke="#e4e4e4" stroke-width="1.900"/></svg>
<svg style="left:1351px;top:983.2px;" width="6" height="8" viewBox="0 0 6 8"><path d="M0 0l5 3.500L0 7z" fill="none" stroke="#8a8a8a" stroke-width="1"/></svg>
<div class="btn2" style="left:1364px;top:977.7px;width:31px;height:18px;"></div>
<div style="left:1347.4px;top:978.7px;width:1px;height:16px;background:#3d3d3d"></div>
<div style="left:1382.3px;top:978.7px;width:1px;height:16px;background:#3d3d3d"></div>
<svg style="left:1366.5px;top:980.8px;" width="14" height="12" viewBox="0 0 14 12"><path d="M7 0v12M4 2.500v7M10 3.500v5" stroke="#e4e4e4" stroke-width="1.100"/><path d="M0 6h3M11 6h3" stroke="#e4e4e4" stroke-width="1.100"/></svg>
<svg style="left:1386px;top:983.2px;" width="6" height="8" viewBox="0 0 6 8"><path d="M0 0l5 3.500L0 7z" fill="none" stroke="#8a8a8a" stroke-width="1"/></svg>
<svg style="left:1743.5px;top:981px;" width="14" height="14" viewBox="0 0 14 14"><circle cx="5.500" cy="5.500" r="4.700" fill="none" stroke="#e0e0e0" stroke-width="1.100"/><path d="M9 9l3.500 3.500" stroke="#e0e0e0" stroke-width="1.800"/><path d="M3.200 5.500h4.600" stroke="#e0e0e0" stroke-width="1.100"/></svg>
<div style="left:1762px;top:985px;width:119px;height:4px;background:#555;border-radius:2px"></div>
<div style="left:1762px;top:985px;width:62px;height:4px;background:#e8e8e8;border-radius:2px"></div>
<div style="left:1818.5px;top:980.8px;width:11px;height:11px;background:#6cc9a8;border-radius:50%"></div>
<div style="left:1821.5px;top:984.5px;width:5px;height:5px;background:#4a9a80;border-radius:50%"></div>
<svg style="left:1888px;top:981px;" width="14" height="14" viewBox="0 0 14 14"><circle cx="5.500" cy="5.500" r="4.700" fill="none" stroke="#e0e0e0" stroke-width="1.100"/><path d="M9 9l3.500 3.500" stroke="#e0e0e0" stroke-width="1.800"/><path d="M3.200 5.500h4.600M5.500 3.200v4.600" stroke="#e0e0e0" stroke-width="1.100"/></svg>
<div style="left:494px;top:1003.8px;width:1420px;height:22px;background:#3b3b3b"></div>
<div style="left:497.5px;top:1010px;width:2px;height:2px;background:#7c7c7c"></div>
<div style="left:497.5px;top:1014px;width:2px;height:2px;background:#7c7c7c"></div>
<div style="left:497.5px;top:1018px;width:2px;height:2px;background:#7c7c7c"></div>
<div class="btn2" style="left:507px;top:1006px;width:19px;height:18px;"></div>
<svg style="left:510px;top:1009px;" width="13" height="12" viewBox="0 0 13 12"><path d="M0 0h13v9H5.500L3 12V9H0z" fill="#e0e0e0"/><path d="M2 2.500h9M2 4.700h9M2 6.900h6" stroke="#2f2f2f" stroke-width="1"/></svg>
<svg style="left:522px;top:1020px;" width="4" height="4" viewBox="0 0 4 4"><path d="M4 0v4H0z" fill="#6fc8a8"/></svg>
<div style="left:528px;top:1008px;width:18px;height:14px;background:#2fc86a;border-radius:2.500px"></div>
<div class="t" style="left:534px;top:1008.5px;height:14px;line-height:14px;color:#163a22;font-size:11.500px">7</div>
<div style="left:553.5px;top:1011.5px;width:6.5px;height:6.5px;background:#2fc86a;border-radius:50%"></div>
<div class="t" style="left:565px;top:1007.5px;height:16px;line-height:16px;letter-spacing:-0.30px;color:#dcdcdc">Saved scene to: D:/DATA/AI Creator/Cavalry/text.cv.</div>
<div class="t" style="left:1360px;top:1007.0px;height:16px;line-height:16px;letter-spacing:-0.65px;font-size:11.8px;font-style:italic;color:#e0e0e0">Click to see next message</div>
<div style="left:1488px;top:1007px;width:80px;height:17px;background:#dab95d;border-radius:2px"></div>
<div class="t" style="left:1493.6px;top:1007.5px;height:16px;line-height:16px;letter-spacing:-0.69px;color:#1c1c1c">Feedback</div>
<div style="left:1571px;top:1007px;width:109px;height:17px;background:#2fc86a;border-radius:2px"></div>
<div class="t" style="left:1576px;top:1007.5px;height:16px;line-height:16px;letter-spacing:-0.37px;color:#1c1c1c">Upgrade to Pro</div>
<div style="left:1683px;top:1007px;width:119px;height:17px;background:#b48ef0;border-radius:2px"></div>
<div class="t" style="left:1688.2px;top:1007.5px;height:16px;line-height:16px;letter-spacing:-0.27px;color:#1c1c1c">Update Available</div>
<div style="left:1805px;top:1007px;width:106px;height:17px;background:#3aa5f0;border-radius:2px"></div>
<div class="t" style="left:1810px;top:1007.5px;height:16px;line-height:16px;letter-spacing:-0.51px;color:#1c1c1c">Tips and Tricks</div>
<svg style="left:1548px;top:1009px;" width="13" height="13" viewBox="0 0 13 13"><rect x="1" y="1" width="9" height="11" fill="#f8f8f8"/><path d="M3 4h5M3 6.500h5" stroke="#999" stroke-width=".8"/><path d="M12.500 3 7 10l-2 1 .5-2.200L11 1.800z" fill="#e88a4a"/></svg>
<svg style="left:1659px;top:1010px;" width="15" height="12" viewBox="0 0 15 12"><path d="M1 6c0-3 2-5 3.500-5S7 3 7 6v5H2.500C1.500 11 1 9 1 6z" fill="#f2c832"/><path d="M15 6c0-3-2-5-3.500-5S9 3 9 6v5h4.500c1 0 1.500-2 1.500-5z" fill="#f2c832"/></svg>
<svg style="left:1780px;top:1008px;" width="15" height="15" viewBox="0 0 15 15"><circle cx="7.500" cy="8" r="6" fill="#f5c542"/><path d="M3 3.500 7.500 0 9 4z" fill="#e85a9a"/><circle cx="5.500" cy="7" r=".9" fill="#5a3a1a"/><circle cx="9.500" cy="7" r=".9" fill="#5a3a1a"/><path d="M5 10c1.500 1.500 3.500 1.500 5 0" fill="none" stroke="#5a3a1a" stroke-width=".9"/><circle cx="12.500" cy="3" r="1" fill="#4ac"/><circle cx="2" cy="9" r=".8" fill="#e55"/></svg>
<svg style="left:1893px;top:1009px;" width="13" height="13" viewBox="0 0 13 13"><path d="M12.500.500C9 .500 6 2.500 4 6l3 3c3.500-2 5.500-5 5.500-8.500z" fill="#e8e8f0"/><path d="M4 6 1.500 6.500 3.500 4.500zM7 9l-.5 2.500 2-2z" fill="#e8524a"/><circle cx="9" cy="4" r="1.200" fill="#4a8ae8"/><path d="M3 8 .5 12.500 5 10z" fill="#f5a532"/></svg>
<!-- taskbar -->
<div style="left:0px;top:1031.5px;width:1920px;height:35px;background:linear-gradient(90deg,#e9e5de 0,#e2e1e0 15%,#dde2ea 35%,#dfe3ec 60%,#e4e5e9 85%,#e7e7e9 100%)"></div>
<svg style="left:20.5px;top:1044.5px;" width="24" height="24" viewBox="0 0 24 24"><defs><linearGradient id="wg" x1="0" y1="0" x2="1" y2="1"><stop offset="0" stop-color="#55c8f8"/><stop offset="1" stop-color="#0a74d2"/></linearGradient></defs><g fill="url(#wg)"><rect x="0" y="0" width="11.300" height="11.300" rx="1"/><rect x="12.700" y="0" width="11.300" height="11.300" rx="1"/><rect x="0" y="12.700" width="11.300" height="11.300" rx="1"/><rect x="12.700" y="12.700" width="11.300" height="11.300" rx="1"/></g></svg>
<svg style="left:62px;top:1042px;" width="28" height="28" viewBox="0 0 28 28"><defs><linearGradient id="sg" x1="0" y1="0" x2="0" y2="1"><stop offset="0" stop-color="#3fc39a"/><stop offset=".35" stop-color="#1a86d8"/><stop offset="1" stop-color="#1068c8"/></linearGradient></defs><circle cx="13.500" cy="13.500" r="9" fill="none" stroke="url(#sg)" stroke-width="3"/><path d="M19.500 20.500l6 7" stroke="#1068c8" stroke-width="3.400" stroke-linecap="round"/></svg>
<div style="left:116px;top:1045px;width:17px;height:16.5px;background:linear-gradient(135deg,#fff,#e4e4e4);border-radius:1.500px;box-shadow:0 0 2px rgba(0,0,0,.15)"></div>
<div style="left:109px;top:1051.5px;width:17.5px;height:16px;background:linear-gradient(135deg,#4a4a4a,#1a1a1a);border-radius:1.500px"></div>
<div style="left:116px;top:1051.5px;width:10.5px;height:9.5px;background:linear-gradient(135deg,#d8d8d8,#a8a8a8)"></div>
<svg style="left:152px;top:1044px;" width="26" height="24" viewBox="0 0 26 24"><defs><linearGradient id="c1" x1="0" y1="0" x2="0" y2="1"><stop offset="0" stop-color="#2a78e8"/><stop offset=".35" stop-color="#35bfd2"/><stop offset=".58" stop-color="#8ad862"/><stop offset=".78" stop-color="#f0d232"/><stop offset="1" stop-color="#f08a30"/></linearGradient><linearGradient id="c2" x1="0" y1="0" x2="0" y2="1"><stop offset="0" stop-color="#2a58e0"/><stop offset=".3" stop-color="#a452e8"/><stop offset=".6" stop-color="#ea5ab0"/><stop offset="1" stop-color="#f8744e"/></linearGradient></defs><path d="M6 1.500h7.500c1.500 0 2.500 1 2 2.500l-3.500 9c-.8 2-2 3-4 3H3c-2 0-2.500-1.500-2-3L3.500 4C4 2.500 5 1.500 6 1.500z" fill="url(#c1)"/><path d="M20 22.500h-7.500c-1.500 0-2.500-1-2-2.500l3.500-9c.8-2 2-3 4-3H23c2 0 2.500 1.500 2 3L22.500 20c-.5 1.500-1.500 2.500-2.500 2.500z" fill="url(#c2)"/><path d="M10 1.500h4c2 0 3.500.5 4.500 2.500l1.500 4h-3z" fill="#2a62e2"/></svg>
<svg style="left:196.5px;top:1044.5px;" width="24" height="22" viewBox="0 0 24 22"><path d="M0 2c0-1 .8-2 2-2h6l2.500 2.500H22c1.200 0 2 .8 2 2V22H0z" fill="#e8a81c"/><path d="M0 6.500h24V22H0z" fill="#fcd24c"/><rect x="5" y="15" width="14" height="7" rx="1.500" fill="#2a86d4"/><rect x="8.500" y="17.800" width="7" height="1.200" fill="#1a5ea4"/></svg>
<svg style="left:240.5px;top:1044px;" width="24" height="24" viewBox="0 0 24 24"><path d="M7 6V4a2.500 2.500 0 0 1 2.500-2.500h5A2.500 2.500 0 0 1 17 4v2" fill="none" stroke="#2aa0e8" stroke-width="1.800"/><path d="M.8 6h22.400v14.500c0 2-1.200 3.500-3.200 3.500H4C2 24 .8 22.500.8 20.500z" fill="#155a9e"/><rect x="7.500" y="10.500" width="4" height="4" fill="#f25022"/><rect x="12.500" y="10.500" width="4" height="4" fill="#7fba00"/><rect x="7.500" y="15.500" width="4" height="4" fill="#00a4ef"/><rect x="12.500" y="15.500" width="4" height="4" fill="#ffb900"/></svg>
<div style="left:418px;top:1046px;width:24px;height:24px;background:#3fd15f;border-radius:50%"></div>
<svg style="left:461px;top:1044px;" width="24" height="24" viewBox="0 0 24 24"><path d="M17.500 0 24 3v18l-6.500 3L6.500 14l-4 3.200L0 16V8l2.500-1.200 4 3.200z" fill="#2a9df0"/><path d="M17.500 0 24 3v18l-6.500 3z" fill="#1a80d8"/><path d="M17.500 6.500v11L10 12z" fill="#e3e6ee"/><path d="M2.500 9.500v5L5 12z" fill="#e3e6ee"/></svg>
<svg style="left:507.5px;top:1043px;" width="19" height="23" viewBox="0 0 19 23"><rect x=".5" y="2" width="18" height="19.500" rx="1.500" fill="#7fd0f2"/><rect x=".5" y="16.500" width="18" height="5" fill="#58b8e4"/><g fill="#1678b8"><rect x="2" y="0" width="2" height="3.500"/><rect x="6.200" y="0" width="2" height="3.500"/><rect x="10.500" y="0" width="2" height="3.500"/><rect x="14.800" y="0" width="2" height="3.500"/><rect x="3.500" y="6.500" width="12" height="1.700"/><rect x="3.500" y="10" width="12" height="1.700"/><rect x="3.500" y="13.500" width="12" height="1.700"/></g><rect x="1" y="22.300" width="17" height=".7" fill="#d89a6a"/></svg>
<div style="left:545px;top:1037px;width:35.5px;height:34px;background:#eef1f6;border-radius:5px;border:1px solid #f8f9fc"></div>
<div style="left:541.5px;top:1037px;width:35.5px;height:34px;background:#f0f2f7;border-radius:5px;border:1px solid #fafbfd;box-shadow:1px 0 1px rgba(0,0,0,.08)"></div>
<svg style="left:551px;top:1046px;" width="20" height="22" viewBox="0 0 20 22"><rect x="0" y="0" width="20" height="20" rx="4.500" fill="#080808"/><path d="M14 6.800 10 4.500 5 7.400v5.800l5 2.900 4-2.300" fill="none" stroke="#e8e8e8" stroke-width="1.700"/><path d="M13.500 8.800 10 6.800 7 8.500v3.600l3 1.700 3.500-2" fill="none" stroke="#aaa" stroke-width=".7" stroke-dasharray="1.200 1"/></svg>
<svg style="left:592.5px;top:1043.5px;" width="25" height="25" viewBox="0 0 25 25"><defs><linearGradient id="pg" x1="0" y1="0" x2="1" y2="1"><stop offset="0" stop-color="#f5a030"/><stop offset=".5" stop-color="#e86060"/><stop offset="1" stop-color="#9a50d8"/></linearGradient></defs><circle cx="12.500" cy="12.500" r="11.300" fill="#3a3a3a" stroke="url(#pg)" stroke-width="2"/><path d="M9 6.500v12l9.500-6z" fill="#fff"/></svg>
<svg style="left:1640px;top:1051px;" width="12" height="8" viewBox="0 0 12 8"><path d="M1 6.500 6 1.500l5 5" fill="none" stroke="#1a1a1a" stroke-width="1.500"/></svg>
<svg style="left:1671.5px;top:1049.5px;" width="13" height="13" viewBox="0 0 16 16"><path d="M0 4h16M0 12h16" stroke="#1a1a1a" stroke-width="1.600"/><rect x="9" y="1" width="3" height="6" rx="1" fill="#1a1a1a"/><rect x="3.500" y="9" width="3" height="6" rx="1" fill="#1a1a1a"/></svg>
<svg style="left:1702px;top:1051px;" width="14.5" height="11.5" viewBox="0 0 17 14"><path d="M1 0v14M16 0v14" stroke="#1a1a1a" stroke-width="1.500"/><path d="M4 13V3l4.500 6L13 3v10" fill="none" stroke="#1a1a1a" stroke-width="2.200"/></svg>
<svg style="left:1733px;top:1048px;" width="18" height="14" viewBox="0 0 18 14"><path d="M1 5a11.500 11.500 0 0 1 16 0M3.500 8a8 8 0 0 1 11 0M6 11a4.200 4.200 0 0 1 6 0" fill="none" stroke="#1a1a1a" stroke-width="1.400"/><circle cx="9" cy="13" r="1.200" fill="#1a1a1a"/></svg>
<svg style="left:1757px;top:1049px;" width="16" height="14" viewBox="0 0 16 14"><path d="M1 4.500h3l4-3.500v12L4 9.500H1z" fill="none" stroke="#1a1a1a" stroke-width="1.300"/><path d="M10.500 4a4 4 0 0 1 0 6M12.500 2a7 7 0 0 1 0 10" fill="none" stroke="#1a1a1a" stroke-width="1.200"/></svg>
<svg style="left:1780px;top:1048px;" width="18" height="15" viewBox="0 0 18 15"><rect x="2" y="4" width="13" height="8" rx="1.500" fill="#1a1a1a"/><rect x="15.500" y="6.500" width="1.800" height="3" fill="#1a1a1a"/><path d="M3 0v3M1 1.500 5 3" stroke="#1a1a1a" stroke-width="1.200"/></svg>
<div class="t" style="right:43px;top:1040.5px;height:16px;line-height:16px;letter-spacing:-0.46px;color:#1a1a1a;font-size:12px;letter-spacing:0">13.22</div>
<div class="t" style="right:43px;top:1056.3px;height:16px;line-height:16px;letter-spacing:-0.06px;color:#1a1a1a;font-size:12px;letter-spacing:-.1px">03/10/2025</div>
<svg style="left:1885px;top:1048px;" width="18" height="18" viewBox="0 0 18 18"><path d="M3 12c1.500-1.500 1.500-3 1.500-5a4.500 4.500 0 0 1 9 0c0 2 0 3.500 1.500 5z" fill="#1a1a1a"/><path d="M7 13.500a2 2 0 0 0 4 0" fill="none" stroke="#1a1a1a" stroke-width="1.300"/><text x="11" y="5" font-size="6" font-weight="bold" fill="#1a1a1a" font-family="Liberation Sans,sans-serif">z</text><text x="14" y="3" font-size="5" font-weight="bold" fill="#1a1a1a" font-family="Liberation Sans,sans-serif">z</text></svg>
<!-- menu -->
<div style="left:272.8px;top:884px;width:163.5px;height:182px;background:#282828;box-shadow:0 2px 8px rgba(0,0,0,.5)"></div>
<div style="left:272.8px;top:976px;width:163.5px;height:23px;background:#6b6b6b"></div>
<div class="t" style="left:296px;top:888.0px;height:16px;line-height:16px;letter-spacing:-0.61px;">Change String Case</div>
<div class="t" style="left:296px;top:911.0px;height:16px;line-height:16px;letter-spacing:-0.32px;">Join String</div>
<svg style="left:276px;top:913px;" width="13" height="12" viewBox="0 0 13 12"><rect x="0" y="3.500" width="4" height="5" fill="#e0e0e0"/><rect x="5" y="5.200" width="2.500" height="1.600" fill="#e0e0e0"/><rect x="8.500" y="3.500" width="4.500" height="5" fill="#e0e0e0"/></svg>
<div class="t" style="left:296px;top:934.0px;height:16px;line-height:16px;letter-spacing:-0.91px;">Regex</div>
<svg style="left:276px;top:936px;" width="13" height="12" viewBox="0 0 13 12"><path d="M.5 9 2 3" stroke="#e0e0e0" stroke-width="1.300"/><rect x="3.500" y="3.500" width="4.500" height="5" fill="#e0e0e0"/><rect x="8.500" y="3.500" width="1.500" height="5" fill="#8a8a8a"/><path d="M10.800 9l1.500-6" stroke="#e0e0e0" stroke-width="1.300"/></svg>
<div class="t" style="left:296px;top:957.0px;height:16px;line-height:16px;letter-spacing:-0.46px;">Replace String</div>
<svg style="left:276px;top:959px;" width="13" height="12" viewBox="0 0 13 12"><path d="M4 1.500h8v7H6" fill="none" stroke="#e0e0e0" stroke-width="1.200"/><path d="M7.500 6 5 8.500 7.500 11z" fill="#e0e0e0"/><rect x="0" y="7" width="4" height="4.500" fill="#e0e0e0"/></svg>
<div class="t" style="left:296px;top:980.0px;height:16px;line-height:16px;letter-spacing:-0.50px;">Resize String</div>
<svg style="left:276px;top:982px;" width="13" height="12" viewBox="0 0 13 12"><rect x="0" y="1" width="12" height="5.500" fill="#e8e8e8"/><path d="M0 9.500h10" stroke="#e8e8e8" stroke-width="1.200"/><path d="M9.500 7.500 12.500 9.500 9.500 11.500z" fill="#e8e8e8"/></svg>
<div class="t" style="left:296px;top:1003.0px;height:16px;line-height:16px;letter-spacing:-0.26px;">Shuffle String</div>
<svg style="left:276px;top:1005px;" width="13" height="12" viewBox="0 0 13 12"><rect x="0" y="0" width="4.500" height="4.500" fill="#e0e0e0"/><path d="M1.500 7c1 3.500 6 4.500 9 1" fill="none" stroke="#e0e0e0" stroke-width="1.300"/><path d="M8 6.500l4-1-.5 4z" fill="#e0e0e0"/></svg>
<div class="t" style="left:296px;top:1026.0px;height:16px;line-height:16px;letter-spacing:-0.36px;">Sub-String</div>
<svg style="left:276px;top:1028px;" width="13" height="12" viewBox="0 0 13 12"><rect x="0" y="3.500" width="3" height="5" fill="#8a8a8a"/><rect x="3.500" y="3.500" width="5" height="5" fill="#e0e0e0"/><rect x="9" y="3.500" width="3.500" height="5" fill="#8a8a8a"/></svg>
<div class="t" style="left:296px;top:1049.0px;height:16px;line-height:16px;letter-spacing:-0.25px;">Transition String</div>
<svg style="left:276px;top:1051px;" width="13" height="12" viewBox="0 0 13 12"><rect x="0" y="1.500" width="2" height="3.500" fill="#e0e0e0"/><rect x="5" y="1.500" width="6" height="3.500" fill="#e0e0e0"/><rect x="0" y="7.500" width="7" height="3.500" fill="#e0e0e0"/><rect x="10.500" y="7.500" width="2" height="3.500" fill="#e0e0e0"/><rect x="12" y="1.500" width="1" height="3.500" fill="#e0e0e0"/></svg>
<div class="t" style="left:275.8px;top:888.5px;height:16px;line-height:16px;font-size:10.500px;font-weight:bold;letter-spacing:-.4px;color:#e0e0e0">A<span style="font-size:9px">a</span></div>
<div style="left:270.6px;top:972.5px;width:168.4px;height:30px;border:3px solid #b4e61e"></div>
</div>
</body></html>
